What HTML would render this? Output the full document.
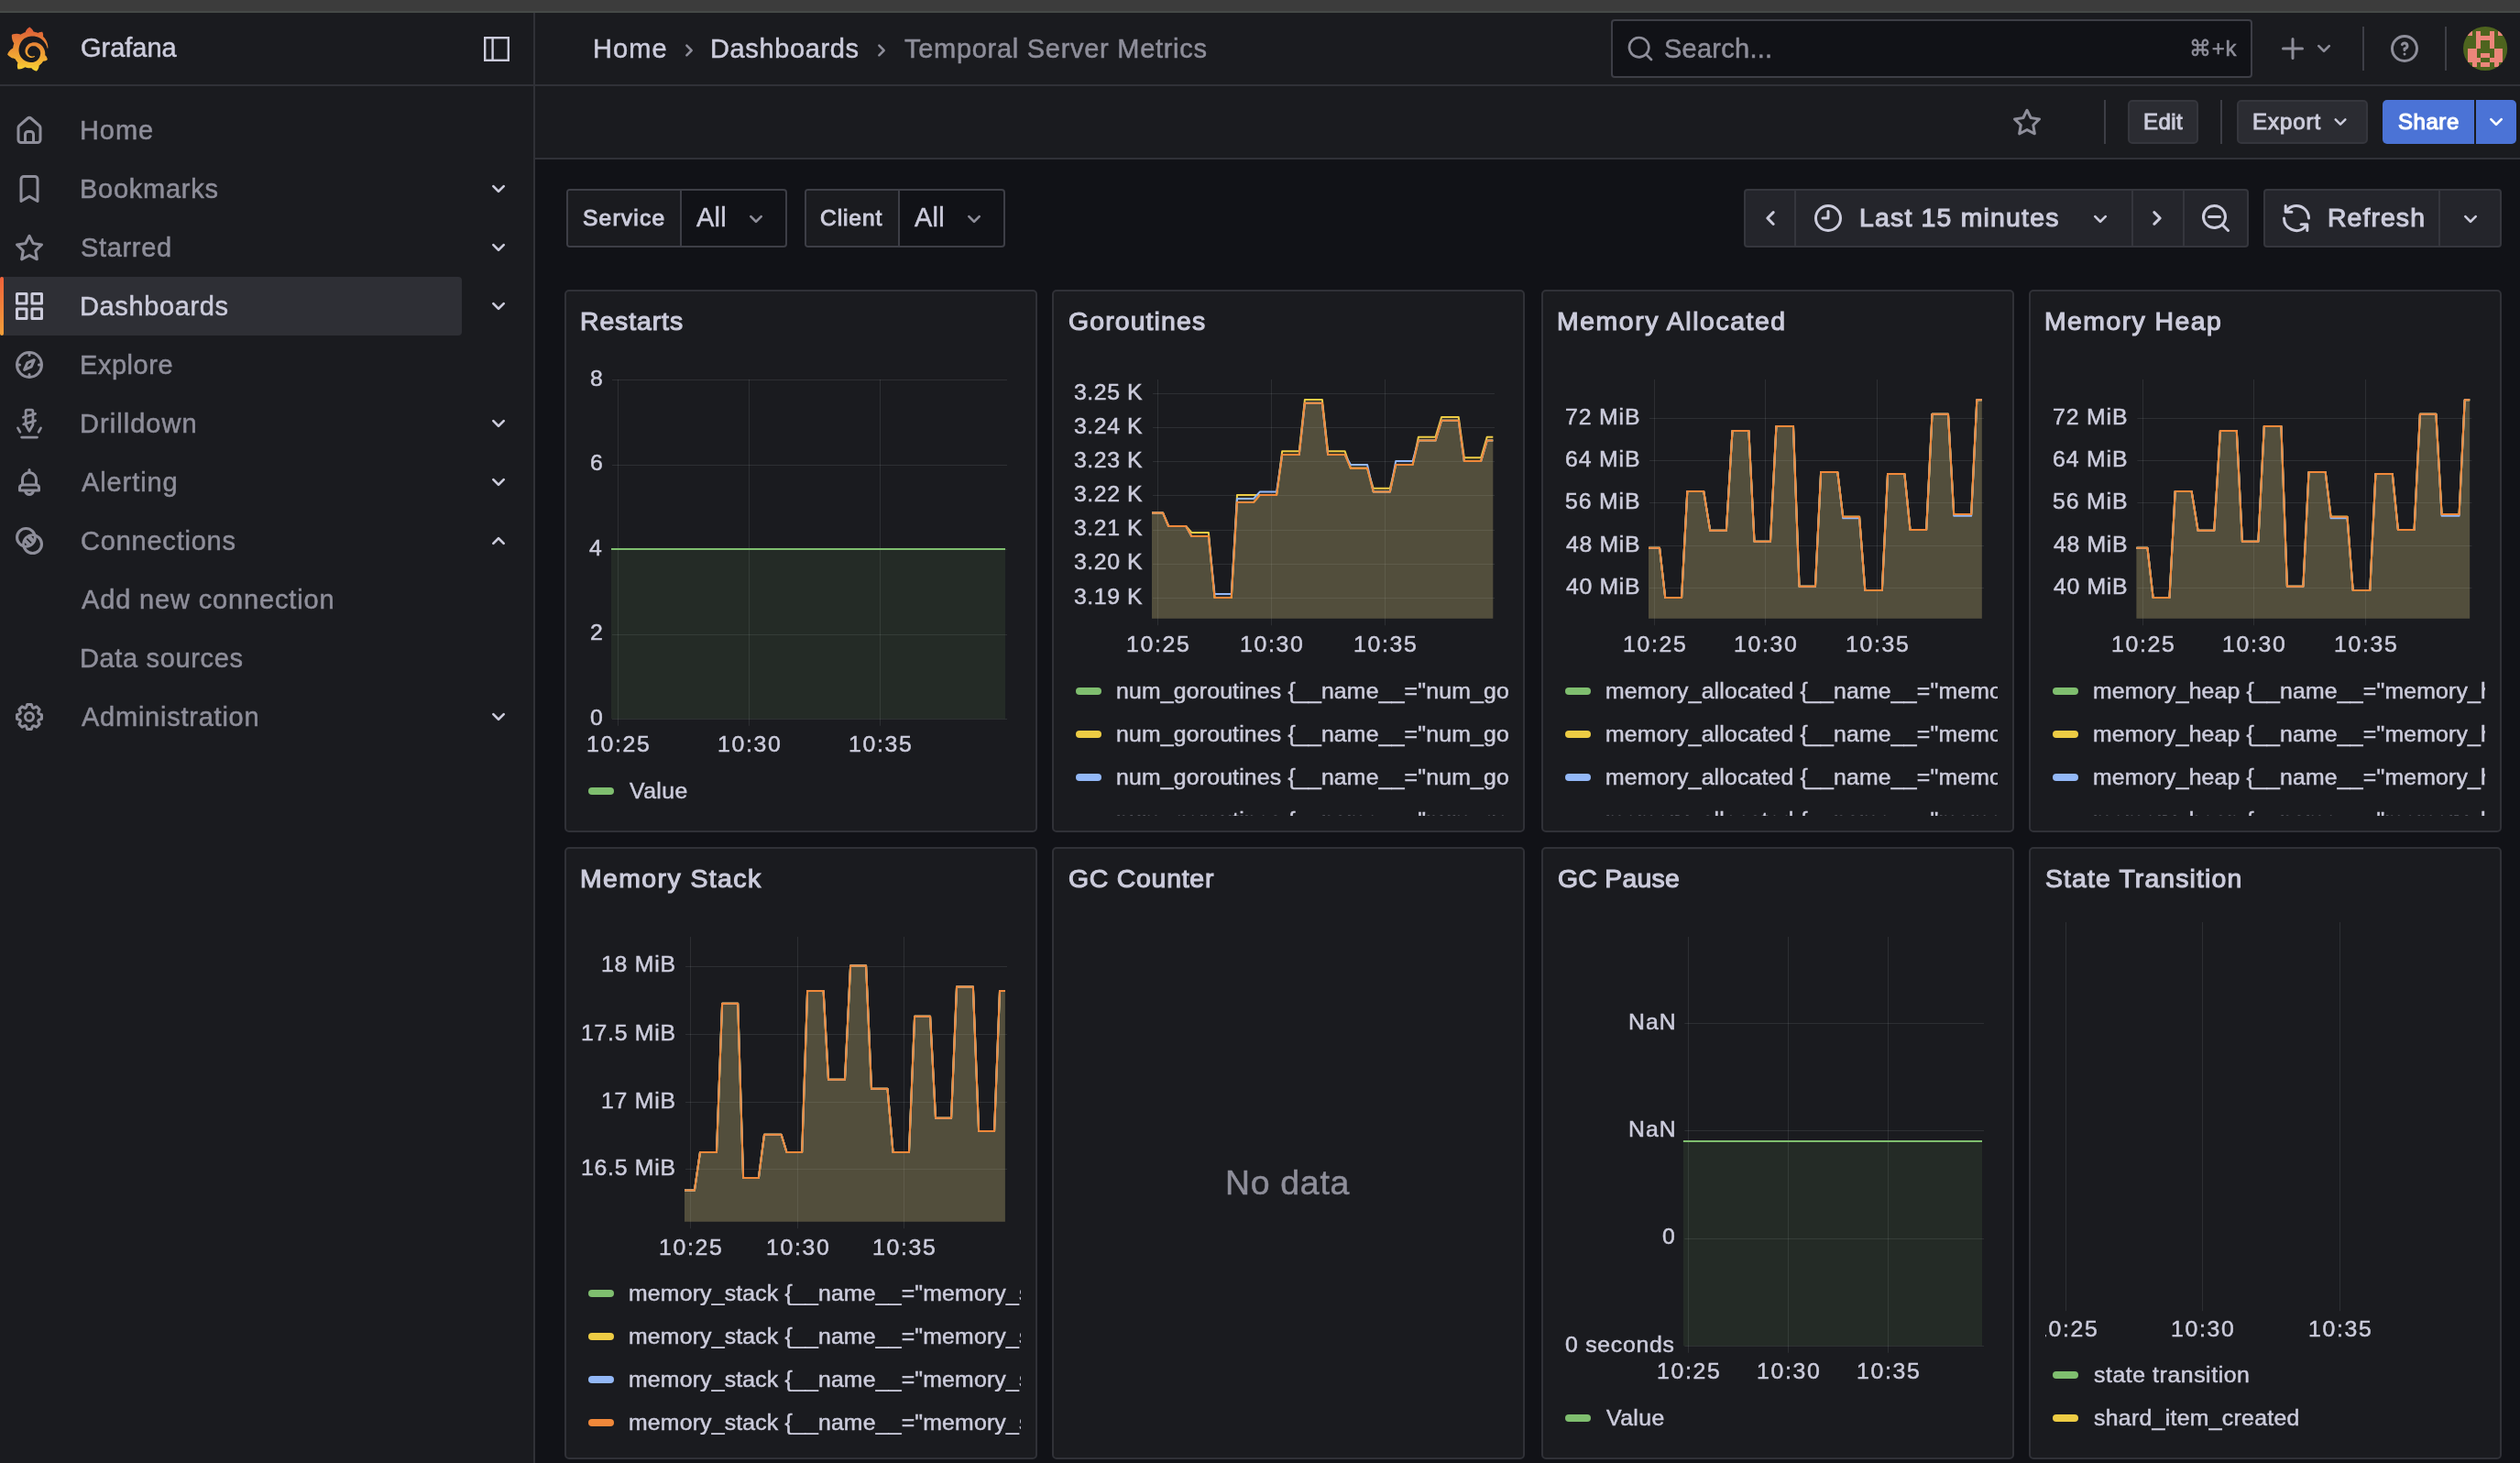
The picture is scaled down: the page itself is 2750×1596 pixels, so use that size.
<!DOCTYPE html>
<html lang="en"><head><meta charset="utf-8"><title>Temporal Server Metrics - Dashboards - Grafana</title>
<style>
html,body{margin:0;padding:0;background:#111217;}
body{width:2750px;height:1596px;position:relative;overflow:hidden;font-family:"Liberation Sans", "DejaVu Sans", sans-serif;}
.a{position:absolute;}
.t{white-space:nowrap;will-change:transform;}
svg{display:block;overflow:visible;}
</style></head><body>
<div class="a" style="left:0px;top:0px;width:2750px;height:12px;background:#3c3c3c;"></div>
<div class="a" style="left:0px;top:12px;width:2750px;height:2px;background:#454947;"></div>
<div class="a" style="left:0px;top:14px;width:2750px;height:160px;background:#1a1b1f;"></div>
<div class="a" style="left:0px;top:14px;width:584px;height:1582px;background:#1a1b1f;"></div>
<div class="a" style="left:0px;top:92px;width:2750px;height:2px;background:#303137;"></div>
<div class="a" style="left:584px;top:172px;width:2166px;height:2px;background:#303137;"></div>
<div class="a" style="left:582px;top:14px;width:2px;height:1582px;background:#303137;"></div>
<svg class="a" style="left:7px;top:28.5px" width="46.5" height="49" viewBox="0 0 351 365"><defs><linearGradient id="lg" x1="0" y1="1" x2="0" y2="0"><stop offset="0" stop-color="#f7d535"/><stop offset="0.25" stop-color="#f3b033"/><stop offset="1" stop-color="#dc5a38"/></linearGradient></defs><path fill="url(#lg)" d="M342,161.2c-0.6-6.1-1.6-13.1-3.6-20.9c-2-7.7-5-16.2-9.4-25c-4.4-8.8-10.1-17.9-17.5-26.8c-2.9-3.5-6.1-6.9-9.5-10.2 c5.1-20.3-6.2-37.9-6.2-37.9c-19.5-1.2-31.9,6.1-36.5,9.4c-0.8-0.3-1.5-0.7-2.3-1c-3.3-1.3-6.7-2.6-10.3-3.7 c-3.5-1.1-7.1-2.1-10.8-3c-3.7-0.9-7.4-1.6-11.2-2.2c-0.7-0.1-1.3-0.2-2-0.3c-8.5-27.2-32.9-38.6-32.9-38.6 c-27.3,17.3-32.4,41.5-32.4,41.5s-0.1,0.5-0.3,1.4c-1.5,0.4-3,0.9-4.5,1.3c-2.1,0.6-4.2,1.4-6.2,2.2c-2.1,0.8-4.1,1.6-6.2,2.5 c-4.1,1.8-8.2,3.8-12.2,6c-3.9,2.2-7.7,4.6-11.4,7.1c-0.5-0.2-1-0.4-1-0.4c-37.8-14.4-71.3,2.9-71.3,2.9 c-3.1,40.2,15.1,65.5,18.7,70.1c-0.9,2.5-1.7,5-2.5,7.5c-2.8,9.1-4.9,18.4-6.2,28.1c-0.2,1.4-0.4,2.8-0.5,4.2 C18.8,192.7,8.5,228,8.5,228c29.1,33.5,63.1,35.6,63.1,35.6c0,0,0.1-0.1,0.1-0.1c4.3,7.7,9.3,15,14.9,21.9c2.4,2.9,4.8,5.6,7.4,8.3 c-10.6,30.4,1.5,55.6,1.5,55.6c32.4,1.2,53.7-14.2,58.2-17.7c3.2,1.1,6.5,2.1,9.8,2.9c10,2.6,20.2,4.1,30.4,4.5 c2.5,0.1,5.1,0.2,7.6,0.1l1.2,0l0.8,0l1.6,0l1.6-0.1l0,0.1c15.3,21.8,42.1,24.9,42.1,24.9c19.1-20.1,20.2-40.1,20.2-44.4l0,0 c0,0,0-0.1,0-0.3c0-0.4,0-0.6,0-0.6l0,0c0-0.3,0-0.6,0-0.9c4-2.8,7.8-5.8,11.4-9.1c7.6-6.9,14.3-14.8,19.9-23.3 c0.5-0.8,1-1.6,1.5-2.4c21.6,1.2,36.9-13.4,36.9-13.4c-3.6-22.5-16.4-33.5-19.1-35.6l0,0c0,0-0.1-0.1-0.3-0.2 c-0.2-0.1-0.2-0.2-0.2-0.2c0,0,0,0,0,0c-0.1-0.1-0.3-0.2-0.5-0.3c0.1-1.4,0.2-2.7,0.3-4.1c0.2-2.4,0.2-4.9,0.2-7.3l0-1.8l0-0.9 l0-0.5c0-0.6,0-0.4,0-0.6l-0.1-1.5l-0.1-2c0-0.7-0.1-1.3-0.2-1.9c-0.1-0.6-0.1-1.3-0.2-1.9l-0.2-1.9l-0.3-1.9 c-0.4-2.5-0.8-4.9-1.4-7.4c-2.3-9.7-6.1-18.9-11-27.2c-5-8.3-11.2-15.6-18.3-21.8c-7-6.2-14.9-11.2-23.1-14.9 c-8.3-3.7-16.9-6.1-25.5-7.2c-4.3-0.6-8.6-0.8-12.9-0.7l-1.6,0l-0.4,0c-0.1,0-0.6,0-0.5,0l-0.7,0l-1.6,0.1 c-0.6,0-1.2,0.1-1.7,0.1c-2.2,0.2-4.4,0.5-6.5,0.9c-8.6,1.6-16.7,4.7-23.8,9c-7.1,4.3-13.3,9.6-18.3,15.6 c-5,6-8.9,12.7-11.6,19.6c-2.7,6.9-4.2,14.1-4.6,21c-0.1,1.7-0.1,3.5-0.1,5.2c0,0.4,0,0.9,0,1.3l0.1,1.4 c0.1,0.8,0.1,1.7,0.2,2.5c0.3,3.5,1,6.9,1.9,10.1c1.9,6.5,4.9,12.4,8.6,17.4c3.7,5,8.2,9.1,12.9,12.4c4.7,3.2,9.8,5.5,14.8,7 c5,1.5,10,2.1,14.7,2.1c0.6,0,1.2,0,1.7,0c0.3,0,0.6,0,0.9,0c0.3,0,0.6,0,0.9-0.1c0.5,0,1-0.1,1.5-0.1c0.1,0,0.3,0,0.4-0.1l0.5-0.1 c0.3,0,0.6-0.1,0.9-0.1c0.6-0.1,1.1-0.2,1.7-0.3c0.6-0.1,1.1-0.2,1.6-0.4c1.1-0.2,2.1-0.6,3.1-0.9c2-0.7,4-1.5,5.7-2.4 c1.8-0.9,3.4-2,5-3c0.4-0.3,0.9-0.6,1.3-1c1.6-1.3,1.9-3.7,0.6-5.3c-1.1-1.4-3.1-1.8-4.7-0.9c-0.4,0.2-0.8,0.4-1.2,0.6 c-1.4,0.7-2.8,1.3-4.3,1.8c-1.5,0.5-3.1,0.9-4.7,1.2c-0.8,0.1-1.6,0.2-2.5,0.3c-0.4,0-0.8,0.1-1.3,0.1c-0.4,0-0.9,0-1.2,0 c-0.4,0-0.8,0-1.2,0c-0.5,0-1,0-1.5-0.1c0,0-0.3,0-0.1,0l-0.2,0l-0.3,0c-0.2,0-0.5,0-0.7-0.1c-0.5-0.1-0.9-0.1-1.4-0.2 c-3.7-0.5-7.4-1.6-10.9-3.2c-3.6-1.6-7-3.8-10.1-6.6c-3.1-2.8-5.8-6.1-7.9-9.9c-2.1-3.8-3.6-8-4.3-12.4c-0.3-2.2-0.5-4.5-0.4-6.7 c0-0.6,0.1-1.2,0.1-1.8c0,0.2,0-0.1,0-0.1l0-0.2l0-0.5c0-0.3,0.1-0.6,0.1-0.9c0.1-1.2,0.3-2.4,0.5-3.6c1.7-9.6,6.5-19,13.9-26.1 c1.9-1.8,3.9-3.4,6-4.9c2.1-1.5,4.4-2.8,6.8-3.9c2.4-1.1,4.8-2,7.4-2.7c2.5-0.7,5.1-1.1,7.8-1.4c1.3-0.1,2.6-0.2,4-0.2 c0.4,0,0.6,0,0.9,0l1.1,0l0.7,0c0.3,0,0,0,0.1,0l0.3,0l1.1,0.1c2.9,0.2,5.7,0.6,8.5,1.3c5.6,1.2,11.1,3.3,16.2,6.1 c10.2,5.7,18.9,14.5,24.2,25.1c2.7,5.3,4.6,11,5.5,16.9c0.2,1.5,0.4,3,0.5,4.5l0.1,1.1l0.1,1.1c0,0.4,0,0.8,0,1.1 c0,0.4,0,0.8,0,1.1l0,1l0,1.1c0,0.7-0.1,1.9-0.1,2.6c-0.1,1.6-0.3,3.3-0.5,4.9c-0.2,1.6-0.5,3.2-0.8,4.8c-0.3,1.6-0.7,3.2-1.1,4.7 c-0.8,3.1-1.8,6.2-3,9.3c-2.4,6-5.6,11.8-9.4,17.1c-7.7,10.6-18.2,19.2-30.2,24.7c-6,2.7-12.3,4.7-18.8,5.7 c-3.2,0.6-6.5,0.9-9.8,1l-0.6,0l-0.5,0l-1.1,0l-1.6,0l-0.8,0c0.4,0-0.1,0-0.1,0l-0.3,0c-1.8,0-3.5-0.1-5.3-0.3 c-7-0.5-13.9-1.8-20.7-3.7c-6.7-1.9-13.2-4.6-19.4-7.8c-12.3-6.6-23.4-15.6-32-26.5c-4.3-5.4-8.1-11.3-11.2-17.4 c-3.1-6.1-5.6-12.6-7.4-19.1c-1.8-6.6-2.9-13.3-3.4-20.1l-0.1-1.3l0-0.3l0-0.3l0-0.6l0-1.1l0-0.3l0-0.4l0-0.8l0-1.6l0-0.3 c0,0,0,0.1,0-0.1l0-0.6c0-0.8,0-1.7,0-2.5c0.1-3.3,0.4-6.8,0.8-10.2c0.4-3.4,1-6.9,1.7-10.3c0.7-3.4,1.5-6.8,2.5-10.2 c1.9-6.7,4.3-13.2,7.1-19.3c5.7-12.2,13.1-23.1,22-31.8c2.2-2.2,4.5-4.2,6.9-6.2c2.4-1.9,4.9-3.7,7.5-5.4c2.5-1.7,5.2-3.2,7.9-4.6 c1.3-0.7,2.7-1.4,4.1-2c0.7-0.3,1.4-0.6,2.1-0.9c0.7-0.3,1.4-0.6,2.1-0.9c2.8-1.2,5.7-2.2,8.7-3.1c0.7-0.2,1.5-0.4,2.2-0.7 c0.7-0.2,1.5-0.4,2.2-0.6c1.5-0.4,3-0.8,4.5-1.1c0.7-0.2,1.5-0.3,2.3-0.5c0.8-0.2,1.5-0.3,2.3-0.5c0.8-0.1,1.5-0.3,2.3-0.4l1.1-0.2 l1.2-0.2c0.8-0.1,1.5-0.2,2.3-0.3c0.9-0.1,1.7-0.2,2.6-0.3c0.7-0.1,1.9-0.2,2.6-0.3c0.5-0.1,1.1-0.1,1.6-0.2l1.1-0.1l0.5-0.1l0.6,0 c0.9-0.1,1.7-0.1,2.6-0.2l1.3-0.1c0,0,0.5,0,0.1,0l0.3,0l0.6,0c0.7,0,1.5-0.1,2.2-0.1c2.9-0.1,5.9-0.1,8.8,0c5.8,0.2,11.5,0.9,17,1.9 c11.1,2.1,21.5,5.6,31,10.3c9.5,4.6,17.9,10.3,25.3,16.5c0.5,0.4,0.9,0.8,1.4,1.2c0.4,0.4,0.9,0.8,1.3,1.2c0.9,0.8,1.7,1.6,2.6,2.4 c0.9,0.8,1.7,1.6,2.5,2.4c0.8,0.8,1.6,1.6,2.4,2.5c3.1,3.3,6,6.6,8.6,10c5.2,6.7,9.4,13.5,12.7,19.9c0.2,0.4,0.4,0.8,0.6,1.2 c0.2,0.4,0.4,0.8,0.6,1.2c0.4,0.8,0.8,1.6,1.1,2.4c0.4,0.8,0.7,1.5,1.1,2.3c0.3,0.8,0.7,1.5,1,2.3c1.2,3,2.4,5.9,3.3,8.6 c1.5,4.4,2.6,8.3,3.5,11.7c0.3,1.4,1.6,2.3,3,2.1c1.5-0.1,2.6-1.3,2.6-2.8C342.6,170.4,342.5,166.1,342,161.2z"/></svg>
<svg class="a" style="left:527px;top:38.5px" width="30" height="29" viewBox="0 0 30 29"><rect x="2.2" y="2.2" width="25.6" height="24.6" fill="none" stroke="#ccccdc" stroke-width="2.4"/><line x1="10.6" y1="2" x2="10.6" y2="27" stroke="#ccccdc" stroke-width="2.4"/></svg>
<svg class="a" style="left:14.00px;top:124.00px" width="36" height="36" viewBox="0 0 24 24"><path fill="#8e8e9a" d="M20,8h0L14,2.74a3,3,0,0,0-4,0L4,8a3,3,0,0,0-1,2.26V19a3,3,0,0,0,3,3H18a3,3,0,0,0,3-3V10.25A3,3,0,0,0,20,8ZM14,20H10V15a1,1,0,0,1,1-1h2a1,1,0,0,1,1,1Zm5-1a1,1,0,0,1-1,1H16V15a3,3,0,0,0-3-3H11a3,3,0,0,0-3,3v5H6a1,1,0,0,1-1-1V10.25a1,1,0,0,1,.34-.75l6-5.25a1,1,0,0,1,1.32,0l6,5.25a1,1,0,0,1,.34.75Z"/></svg>
<svg class="a" style="left:14.00px;top:188.00px" width="36" height="36" viewBox="0 0 24 24"><path fill="#8e8e9a" d="M16,2H8A3,3,0,0,0,5,5V21a1,1,0,0,0,.5.87,1,1,0,0,0,1,0L12,18.69l5.5,3.18A1,1,0,0,0,18,22a1,1,0,0,0,.5-.13A1,1,0,0,0,19,21V5A3,3,0,0,0,16,2Zm1,17.27-4.5-2.6a1,1,0,0,0-1,0L7,19.27V5A1,1,0,0,1,8,4h8a1,1,0,0,1,1,1Z"/></svg>
<svg class="a" style="left:528.00px;top:190.00px" width="32" height="32" viewBox="0 0 24 24"><path fill="#ccccdc" d="M17,9.17a1,1,0,0,0-1.41,0L12,12.71,8.46,9.17a1,1,0,0,0-1.41,0,1,1,0,0,0,0,1.42l4.24,4.24a1,1,0,0,0,1.42,0L17,10.59A1,1,0,0,0,17,9.17Z"/></svg>
<svg class="a" style="left:14.00px;top:252.00px" width="36" height="36" viewBox="0 0 24 24"><path fill="#8e8e9a" d="M22,9.67A1,1,0,0,0,21.14,9l-5.69-.83L12.9,3a1,1,0,0,0-1.8,0L8.55,8.16,2.86,9a1,1,0,0,0-.81.68,1,1,0,0,0,.25,1l4.13,4-1,5.68A1,1,0,0,0,6.9,21.44L12,18.77l5.1,2.67a.93.93,0,0,0,.46.12,1,1,0,0,0,.59-.19,1,1,0,0,0,.4-1l-1-5.68,4.13-4A1,1,0,0,0,22,9.67Zm-6.15,4a1,1,0,0,0-.29.88l.72,4.2-3.76-2a1.06,1.06,0,0,0-.94,0l-3.76,2,.72-4.2a1,1,0,0,0-.29-.88l-3-3,4.21-.61a1,1,0,0,0,.76-.55L12,5.7l1.88,3.82a1,1,0,0,0,.76.55l4.21.61Z"/></svg>
<svg class="a" style="left:528.00px;top:254.00px" width="32" height="32" viewBox="0 0 24 24"><path fill="#ccccdc" d="M17,9.17a1,1,0,0,0-1.41,0L12,12.71,8.46,9.17a1,1,0,0,0-1.41,0,1,1,0,0,0,0,1.42l4.24,4.24a1,1,0,0,0,1.42,0L17,10.59A1,1,0,0,0,17,9.17Z"/></svg>
<div class="a" style="left:0px;top:302px;width:504px;height:64px;background:#2e2f35;border-radius:4px;"></div>
<div class="a" style="left:0;top:302px;width:4px;height:64px;border-radius:4px;background:linear-gradient(180deg,#f0623a,#f2a03a)"></div>
<svg class="a" style="left:14.00px;top:316.00px" width="36" height="36" viewBox="0 0 24 24"><path fill="#ccccdc" d="M10,13H3a1,1,0,0,0-1,1v7a1,1,0,0,0,1,1h7a1,1,0,0,0,1-1V14A1,1,0,0,0,10,13ZM9,20H4V15H9ZM21,2H14a1,1,0,0,0-1,1v7a1,1,0,0,0,1,1h7a1,1,0,0,0,1-1V3A1,1,0,0,0,21,2ZM20,9H15V4h5Zm1,4H14a1,1,0,0,0-1,1v7a1,1,0,0,0,1,1h7a1,1,0,0,0,1-1V14A1,1,0,0,0,21,13Zm-1,7H15V15h5ZM10,2H3A1,1,0,0,0,2,3v7a1,1,0,0,0,1,1h7a1,1,0,0,0,1-1V3A1,1,0,0,0,10,2ZM9,9H4V4H9Z"/></svg>
<svg class="a" style="left:528.00px;top:318.00px" width="32" height="32" viewBox="0 0 24 24"><path fill="#ccccdc" d="M17,9.17a1,1,0,0,0-1.41,0L12,12.71,8.46,9.17a1,1,0,0,0-1.41,0,1,1,0,0,0,0,1.42l4.24,4.24a1,1,0,0,0,1.42,0L17,10.59A1,1,0,0,0,17,9.17Z"/></svg>
<svg class="a" style="left:14.00px;top:380.00px" width="36" height="36" viewBox="0 0 24 24"><path fill="#8e8e9a" d="M12,2A10,10,0,1,0,22,12,10,10,0,0,0,12,2Zm1,17.93V19a1,1,0,0,0-2,0v.93A8,8,0,0,1,4.07,13H5a1,1,0,0,0,0-2H4.07A8,8,0,0,1,11,4.07V5a1,1,0,0,0,2,0V4.07A8,8,0,0,1,19.93,11H19a1,1,0,0,0,0,2h.93A8,8,0,0,1,13,19.93ZM15.14,7.55l-5,2.12a1,1,0,0,0-.52.52l-2.12,5a1,1,0,0,0,.21,1.1,1,1,0,0,0,.7.3.93.93,0,0,0,.4-.09l5-2.12a1,1,0,0,0,.52-.52l2.12-5a1,1,0,0,0-1.31-1.31Zm-2.49,5.1-2.28,1,1-2.28,2.28-1Z"/></svg>
<svg class="a" style="left:14px;top:444px" width="36" height="36" viewBox="0 0 24 24" fill="none" stroke="#8e8e9a" stroke-width="1.8" stroke-linecap="round" stroke-linejoin="round"><path d="M10.4,2.05h3.2a1,1,0,0,1,1,1V13L12,17.6,9.4,13V3.05a1,1,0,0,1,1-1Z"/><path d="M7.6,7.5L16.4,4.9M7.8,12.6L16.4,9.9"/><path d="M3.6,15.2L5.3,18.2M20.4,15.2L18.7,18.2M6.4,22.05H17.7"/></svg>
<svg class="a" style="left:528.00px;top:446.00px" width="32" height="32" viewBox="0 0 24 24"><path fill="#ccccdc" d="M17,9.17a1,1,0,0,0-1.41,0L12,12.71,8.46,9.17a1,1,0,0,0-1.41,0,1,1,0,0,0,0,1.42l4.24,4.24a1,1,0,0,0,1.42,0L17,10.59A1,1,0,0,0,17,9.17Z"/></svg>
<svg class="a" style="left:14.00px;top:508.00px" width="36" height="36" viewBox="0 0 24 24"><path fill="#8e8e9a" d="M18,13.18V10a6,6,0,0,0-5-5.91V3a1,1,0,0,0-2,0V4.09A6,6,0,0,0,6,10v3.18A3,3,0,0,0,4,16v2a1,1,0,0,0,1,1H8.14a4,4,0,0,0,7.72,0H19a1,1,0,0,0,1-1V16A3,3,0,0,0,18,13.18ZM8,10a4,4,0,0,1,8,0v3H8Zm4,10a2,2,0,0,1-1.72-1h3.44A2,2,0,0,1,12,20Zm6-3H6V16a1,1,0,0,1,1-1H17a1,1,0,0,1,1,1Z"/></svg>
<svg class="a" style="left:528.00px;top:510.00px" width="32" height="32" viewBox="0 0 24 24"><path fill="#ccccdc" d="M17,9.17a1,1,0,0,0-1.41,0L12,12.71,8.46,9.17a1,1,0,0,0-1.41,0,1,1,0,0,0,0,1.42l4.24,4.24a1,1,0,0,0,1.42,0L17,10.59A1,1,0,0,0,17,9.17Z"/></svg>
<svg class="a" style="left:10px;top:568px" width="44" height="44" viewBox="0 0 44 44"><defs><clipPath id="cn1"><circle cx="18.4" cy="18.3" r="9.85"/></clipPath></defs><circle cx="25.6" cy="25.6" r="9.9" fill="#8e8e9a" clip-path="url(#cn1)"/><circle cx="18.4" cy="18.3" r="9.85" fill="none" stroke="#8e8e9a" stroke-width="3.1"/><circle cx="25.6" cy="25.6" r="9.9" fill="none" stroke="#8e8e9a" stroke-width="3.1"/><path d="M19.3,19.6L24.1,24.4" stroke="#1a1b1f" stroke-width="1.6"/><path d="M24.1,16.8L26.8,17.1L26.5,19.9ZM16.8,24.1L19.6,26.5L17,26.8Z" fill="#1a1b1f"/></svg>
<svg class="a" style="left:528.00px;top:574.00px" width="32" height="32" viewBox="0 0 24 24"><path fill="#ccccdc" d="M17,13.41,12.71,9.17a1,1,0,0,0-1.42,0L7.05,13.41a1,1,0,0,0,0,1.42,1,1,0,0,0,1.41,0L12,11.29l3.54,3.54a1,1,0,0,0,.7.29,1,1,0,0,0,.71-.29A1,1,0,0,0,17,13.41Z"/></svg>
<svg class="a" style="left:14.00px;top:764.00px" width="36" height="36" viewBox="0 0 24 24"><path fill="#8e8e9a" d="M21.32,9.55l-1.89-.63.89-1.78A1,1,0,0,0,20.13,6L18,3.87a1,1,0,0,0-1.15-.19l-1.78.89-.63-1.89A1,1,0,0,0,13.5,2h-3a1,1,0,0,0-.95.68L8.92,4.57,7.14,3.68A1,1,0,0,0,6,3.87L3.87,6a1,1,0,0,0-.19,1.15l.89,1.78-1.89.63A1,1,0,0,0,2,10.5v3a1,1,0,0,0,.68.95l1.89.63-.89,1.78A1,1,0,0,0,3.87,18L6,20.13a1,1,0,0,0,1.15.19l1.78-.89.63,1.89a1,1,0,0,0,.95.68h3a1,1,0,0,0,.95-.68l.63-1.89,1.78.89A1,1,0,0,0,18,20.13L20.13,18a1,1,0,0,0,.19-1.15l-.89-1.78,1.89-.63A1,1,0,0,0,22,13.5v-3A1,1,0,0,0,21.32,9.55ZM20,12.78l-1.2.4A2,2,0,0,0,17.64,16l.57,1.14-1.1,1.1L16,17.64a2,2,0,0,0-2.79,1.16l-.4,1.2H11.22l-.4-1.2A2,2,0,0,0,8,17.64l-1.14.57-1.1-1.1L6.36,16A2,2,0,0,0,5.2,13.18L4,12.78V11.22l1.2-.4A2,2,0,0,0,6.36,8L5.79,6.89l1.1-1.1L8,6.36A2,2,0,0,0,10.82,5.2l.4-1.2h1.56l.4,1.2A2,2,0,0,0,16,6.36l1.14-.57,1.1,1.1L17.64,8a2,2,0,0,0,1.16,2.79l1.2.4ZM12,8a4,4,0,1,0,4,4A4,4,0,0,0,12,8Zm0,6a2,2,0,1,1,2-2A2,2,0,0,1,12,14Z"/></svg>
<svg class="a" style="left:528.00px;top:766.00px" width="32" height="32" viewBox="0 0 24 24"><path fill="#ccccdc" d="M17,9.17a1,1,0,0,0-1.41,0L12,12.71,8.46,9.17a1,1,0,0,0-1.41,0,1,1,0,0,0,0,1.42l4.24,4.24a1,1,0,0,0,1.42,0L17,10.59A1,1,0,0,0,17,9.17Z"/></svg>
<svg class="a" style="left:736.50px;top:40.00px" width="30" height="30" viewBox="0 0 24 24"><path fill="#8e8e9a" d="M14.83,11.29,10.59,7.05a1,1,0,0,0-1.42,0,1,1,0,0,0,0,1.41L12.71,12,9.17,15.54a1,1,0,0,0,0,1.41,1,1,0,0,0,.71.29,1,1,0,0,0,.71-.29l4.24-4.24A1,1,0,0,0,14.83,11.29Z"/></svg>
<svg class="a" style="left:946.75px;top:40.00px" width="30" height="30" viewBox="0 0 24 24"><path fill="#8e8e9a" d="M14.83,11.29,10.59,7.05a1,1,0,0,0-1.42,0,1,1,0,0,0,0,1.41L12.71,12,9.17,15.54a1,1,0,0,0,0,1.41,1,1,0,0,0,.71.29,1,1,0,0,0,.71-.29l4.24-4.24A1,1,0,0,0,14.83,11.29Z"/></svg>
<div class="a" style="left:1758px;top:21px;width:700px;height:64px;background:#111217;border:2px solid #3d3e46;border-radius:4px;box-sizing:border-box;"></div>
<svg class="a" style="left:1774.00px;top:37.00px" width="32" height="32" viewBox="0 0 24 24"><path fill="#8e8e9a" d="M21.71,20.29,18,16.61A9,9,0,1,0,16.61,18l3.68,3.68a1,1,0,0,0,1.42,0A1,1,0,0,0,21.71,20.29ZM11,18a7,7,0,1,1,7-7A7,7,0,0,1,11,18Z"/></svg>
<svg class="a" style="left:2484.00px;top:34.80px" width="36" height="36" viewBox="0 0 24 24"><path fill="#8e8e9a" d="M19,11H13V5a1,1,0,0,0-2,0v6H5a1,1,0,0,0,0,2h6v6a1,1,0,0,0,2,0V13h6a1,1,0,0,0,0-2Z"/></svg>
<svg class="a" style="left:2520.00px;top:37.00px" width="32" height="32" viewBox="0 0 24 24"><path fill="#8e8e9a" d="M17,9.17a1,1,0,0,0-1.41,0L12,12.71,8.46,9.17a1,1,0,0,0-1.41,0,1,1,0,0,0,0,1.42l4.24,4.24a1,1,0,0,0,1.42,0L17,10.59A1,1,0,0,0,17,9.17Z"/></svg>
<div class="a" style="left:2578px;top:29px;width:2px;height:48px;background:#3d3e46;"></div>
<svg class="a" style="left:2605.75px;top:35.00px" width="36" height="36" viewBox="0 0 24 24"><path fill="#8e8e9a" d="M11.29,15.29a1.58,1.58,0,0,0-.12.15.76.76,0,0,0-.09.18.64.64,0,0,0-.06.18,1.36,1.36,0,0,0,0,.2.84.84,0,0,0,.08.38.9.9,0,0,0,.54.54.94.94,0,0,0,.76,0,.9.9,0,0,0,.54-.54A1,1,0,0,0,13,16a1,1,0,0,0-.29-.71A1,1,0,0,0,11.29,15.29ZM12,2A10,10,0,1,0,22,12,10,10,0,0,0,12,2Zm0,18a8,8,0,1,1,8-8A8,8,0,0,1,12,20ZM12,7A3,3,0,0,0,9.4,8.5a1,1,0,1,0,1.73,1A1,1,0,0,1,12,9a1,1,0,0,1,0,2,1,1,0,0,0-1,1v1a1,1,0,0,0,2,0v-.18A3,3,0,0,0,12,7Z"/></svg>
<div class="a" style="left:2668px;top:29px;width:2px;height:48px;background:#3d3e46;"></div>
<svg class="a" style="left:2688px;top:29px" width="48.4" height="48.4"><defs><clipPath id="av"><circle cx="24.1" cy="24" r="24.1"/></clipPath></defs><g clip-path="url(#av)"><rect width="49" height="49" fill="#4e641e"/><rect x="4.90" y="5.10" width="4.94" height="4.94" fill="#ec867a" shape-rendering="crispEdges"/><rect x="14.48" y="5.10" width="4.94" height="4.94" fill="#ec867a" shape-rendering="crispEdges"/><rect x="28.85" y="5.10" width="4.94" height="4.94" fill="#ec867a" shape-rendering="crispEdges"/><rect x="38.43" y="5.10" width="4.94" height="4.94" fill="#ec867a" shape-rendering="crispEdges"/><rect x="14.48" y="9.89" width="4.94" height="4.94" fill="#ec867a" shape-rendering="crispEdges"/><rect x="19.27" y="9.89" width="4.94" height="4.94" fill="#ec867a" shape-rendering="crispEdges"/><rect x="24.06" y="9.89" width="4.94" height="4.94" fill="#ec867a" shape-rendering="crispEdges"/><rect x="28.85" y="9.89" width="4.94" height="4.94" fill="#ec867a" shape-rendering="crispEdges"/><rect x="14.48" y="14.68" width="4.94" height="4.94" fill="#ec867a" shape-rendering="crispEdges"/><rect x="28.85" y="14.68" width="4.94" height="4.94" fill="#ec867a" shape-rendering="crispEdges"/><rect x="14.48" y="19.47" width="4.94" height="4.94" fill="#ec867a" shape-rendering="crispEdges"/><rect x="28.85" y="19.47" width="4.94" height="4.94" fill="#ec867a" shape-rendering="crispEdges"/><rect x="4.90" y="24.26" width="4.94" height="4.94" fill="#ec867a" shape-rendering="crispEdges"/><rect x="9.69" y="24.26" width="4.94" height="4.94" fill="#ec867a" shape-rendering="crispEdges"/><rect x="33.64" y="24.26" width="4.94" height="4.94" fill="#ec867a" shape-rendering="crispEdges"/><rect x="38.43" y="24.26" width="4.94" height="4.94" fill="#ec867a" shape-rendering="crispEdges"/><rect x="4.90" y="29.05" width="4.94" height="4.94" fill="#ec867a" shape-rendering="crispEdges"/><rect x="9.69" y="29.05" width="4.94" height="4.94" fill="#ec867a" shape-rendering="crispEdges"/><rect x="19.27" y="29.05" width="4.94" height="4.94" fill="#ec867a" shape-rendering="crispEdges"/><rect x="24.06" y="29.05" width="4.94" height="4.94" fill="#ec867a" shape-rendering="crispEdges"/><rect x="33.64" y="29.05" width="4.94" height="4.94" fill="#ec867a" shape-rendering="crispEdges"/><rect x="38.43" y="29.05" width="4.94" height="4.94" fill="#ec867a" shape-rendering="crispEdges"/><rect x="4.90" y="33.84" width="4.94" height="4.94" fill="#ec867a" shape-rendering="crispEdges"/><rect x="9.69" y="33.84" width="4.94" height="4.94" fill="#ec867a" shape-rendering="crispEdges"/><rect x="14.48" y="33.84" width="4.94" height="4.94" fill="#ec867a" shape-rendering="crispEdges"/><rect x="28.85" y="33.84" width="4.94" height="4.94" fill="#ec867a" shape-rendering="crispEdges"/><rect x="33.64" y="33.84" width="4.94" height="4.94" fill="#ec867a" shape-rendering="crispEdges"/><rect x="38.43" y="33.84" width="4.94" height="4.94" fill="#ec867a" shape-rendering="crispEdges"/><rect x="9.69" y="38.63" width="4.94" height="4.94" fill="#ec867a" shape-rendering="crispEdges"/><rect x="19.27" y="38.63" width="4.94" height="4.94" fill="#ec867a" shape-rendering="crispEdges"/><rect x="24.06" y="38.63" width="4.94" height="4.94" fill="#ec867a" shape-rendering="crispEdges"/><rect x="33.64" y="38.63" width="4.94" height="4.94" fill="#ec867a" shape-rendering="crispEdges"/></g></svg>
<svg class="a" style="left:2194.00px;top:115.00px" width="36" height="36" viewBox="0 0 24 24"><path fill="#8e8e9a" d="M22,9.67A1,1,0,0,0,21.14,9l-5.69-.83L12.9,3a1,1,0,0,0-1.8,0L8.55,8.16,2.86,9a1,1,0,0,0-.81.68,1,1,0,0,0,.25,1l4.13,4-1,5.68A1,1,0,0,0,6.9,21.44L12,18.77l5.1,2.67a.93.93,0,0,0,.46.12,1,1,0,0,0,.59-.19,1,1,0,0,0,.4-1l-1-5.68,4.13-4A1,1,0,0,0,22,9.67Zm-6.15,4a1,1,0,0,0-.29.88l.72,4.2-3.76-2a1.06,1.06,0,0,0-.94,0l-3.76,2,.72-4.2a1,1,0,0,0-.29-.88l-3-3,4.21-.61a1,1,0,0,0,.76-.55L12,5.7l1.88,3.82a1,1,0,0,0,.76.55l4.21.61Z"/></svg>
<div class="a" style="left:2296px;top:109px;width:2px;height:48px;background:#3d3e46;"></div>
<div class="a" style="left:2322px;top:109px;width:77px;height:48px;background:#2b2c32;border:2px solid #35363d;border-radius:5px;box-sizing:border-box;"></div>
<div class="a" style="left:2423px;top:109px;width:2px;height:48px;background:#3d3e46;"></div>
<div class="a" style="left:2441px;top:109px;width:143px;height:48px;background:#2b2c32;border:2px solid #35363d;border-radius:5px;box-sizing:border-box;"></div>
<svg class="a" style="left:2539.25px;top:118.00px" width="30" height="30" viewBox="0 0 24 24"><path fill="#ccccdc" d="M17,9.17a1,1,0,0,0-1.41,0L12,12.71,8.46,9.17a1,1,0,0,0-1.41,0,1,1,0,0,0,0,1.42l4.24,4.24a1,1,0,0,0,1.42,0L17,10.59A1,1,0,0,0,17,9.17Z"/></svg>
<div class="a" style="left:2600px;top:109px;width:100px;height:48px;background:#4b73d6;border-radius:5px 0 0 5px;"></div>
<div class="a" style="left:2702px;top:109px;width:44px;height:48px;background:#4b73d6;border-radius:0 5px 5px 0;"></div>
<svg class="a" style="left:2708.00px;top:117.00px" width="32" height="32" viewBox="0 0 24 24"><path fill="#ffffff" d="M17,9.17a1,1,0,0,0-1.41,0L12,12.71,8.46,9.17a1,1,0,0,0-1.41,0,1,1,0,0,0,0,1.42l4.24,4.24a1,1,0,0,0,1.42,0L17,10.59A1,1,0,0,0,17,9.17Z"/></svg>
<div class="a" style="left:618px;top:206px;width:241px;height:64px;background:#111217;border:2px solid #3d3e46;border-radius:4px;box-sizing:border-box;"></div>
<div class="a" style="left:620px;top:208px;width:122px;height:60px;background:#1a1b1f;border-right:2px solid #3d3e46;border-radius:3px 0 0 3px;"></div>
<svg class="a" style="left:809.00px;top:222.50px" width="32" height="32" viewBox="0 0 24 24"><path fill="#8e8e9a" d="M17,9.17a1,1,0,0,0-1.41,0L12,12.71,8.46,9.17a1,1,0,0,0-1.41,0,1,1,0,0,0,0,1.42l4.24,4.24a1,1,0,0,0,1.42,0L17,10.59A1,1,0,0,0,17,9.17Z"/></svg>
<div class="a" style="left:878px;top:206px;width:219px;height:64px;background:#111217;border:2px solid #3d3e46;border-radius:4px;box-sizing:border-box;"></div>
<div class="a" style="left:880px;top:208px;width:100px;height:60px;background:#1a1b1f;border-right:2px solid #3d3e46;border-radius:3px 0 0 3px;"></div>
<svg class="a" style="left:1047.00px;top:222.50px" width="32" height="32" viewBox="0 0 24 24"><path fill="#8e8e9a" d="M17,9.17a1,1,0,0,0-1.41,0L12,12.71,8.46,9.17a1,1,0,0,0-1.41,0,1,1,0,0,0,0,1.42l4.24,4.24a1,1,0,0,0,1.42,0L17,10.59A1,1,0,0,0,17,9.17Z"/></svg>
<div class="a" style="left:1903px;top:206px;width:551px;height:64px;background:#24252b;border:2px solid #35363d;border-radius:4px;box-sizing:border-box;"></div>
<div class="a" style="left:1958px;top:208px;width:2px;height:60px;background:#35363d;"></div>
<div class="a" style="left:2326px;top:208px;width:2px;height:60px;background:#35363d;"></div>
<div class="a" style="left:2382px;top:208px;width:2px;height:60px;background:#35363d;"></div>
<svg class="a" style="left:1913.50px;top:220.00px" width="36" height="36" viewBox="0 0 24 24"><path fill="#ccccdc" d="M11.29,12l3.54-3.54a1,1,0,0,0,0-1.41,1,1,0,0,0-1.42,0L9.17,11.29a1,1,0,0,0,0,1.42L13.41,17a1,1,0,0,0,.71.29,1,1,0,0,0,.71-.29,1,1,0,0,0,0-1.41Z"/></svg>
<svg class="a" style="left:1977.00px;top:220.00px" width="36" height="36" viewBox="0 0 24 24"><path fill="#ccccdc" d="M12,2A10,10,0,1,0,22,12,10.01114,10.01114,0,0,0,12,2Zm0,18a8,8,0,1,1,8-8A8.00917,8.00917,0,0,1,12,20ZM12,6a.99974.99974,0,0,0-1,1v4H8a1,1,0,0,0,0,2h4a.99974.99974,0,0,0,1-1V7A.99974.99974,0,0,0,12,6Z"/></svg>
<svg class="a" style="left:2276.00px;top:222.50px" width="32" height="32" viewBox="0 0 24 24"><path fill="#ccccdc" d="M17,9.17a1,1,0,0,0-1.41,0L12,12.71,8.46,9.17a1,1,0,0,0-1.41,0,1,1,0,0,0,0,1.42l4.24,4.24a1,1,0,0,0,1.42,0L17,10.59A1,1,0,0,0,17,9.17Z"/></svg>
<svg class="a" style="left:2335.60px;top:220.00px" width="36" height="36" viewBox="0 0 24 24"><path fill="#ccccdc" d="M14.83,11.29,10.59,7.05a1,1,0,0,0-1.42,0,1,1,0,0,0,0,1.41L12.71,12,9.17,15.54a1,1,0,0,0,0,1.41,1,1,0,0,0,.71.29,1,1,0,0,0,.71-.29l4.24-4.24A1,1,0,0,0,14.83,11.29Z"/></svg>
<svg class="a" style="left:2400.00px;top:220.00px" width="36" height="36" viewBox="0 0 24 24"><path fill="#ccccdc" d="M21.71,20.29,18,16.61A9,9,0,1,0,16.61,18l3.68,3.68a1,1,0,0,0,1.42,0A1,1,0,0,0,21.71,20.29ZM11,18a7,7,0,1,1,7-7A7,7,0,0,1,11,18ZM15,10H7a1,1,0,0,0,0,2h8a1,1,0,0,0,0-2Z"/></svg>
<div class="a" style="left:2470px;top:206px;width:260px;height:64px;background:#24252b;border:2px solid #35363d;border-radius:4px;box-sizing:border-box;"></div>
<div class="a" style="left:2661px;top:208px;width:2px;height:60px;background:#35363d;"></div>
<svg class="a" style="left:2488.00px;top:220.00px" width="36" height="36" viewBox="0 0 24 24"><path fill="#ccccdc" d="M19.91,15.51H15.38a1,1,0,0,0,0,2h2.4A8,8,0,0,1,4,12a1,1,0,0,0-2,0,10,10,0,0,0,16.88,7.23V21a1,1,0,0,0,2,0V16.5A1,1,0,0,0,19.91,15.51ZM12,2A10,10,0,0,0,5.12,4.77V3a1,1,0,0,0-2,0V7.5a1,1,0,0,0,1,1h4.5a1,1,0,0,0,0-2H6.22A8,8,0,0,1,20,12a1,1,0,0,0,2,0A10,10,0,0,0,12,2Z"/></svg>
<svg class="a" style="left:2680.00px;top:222.50px" width="32" height="32" viewBox="0 0 24 24"><path fill="#ccccdc" d="M17,9.17a1,1,0,0,0-1.41,0L12,12.71,8.46,9.17a1,1,0,0,0-1.41,0,1,1,0,0,0,0,1.42l4.24,4.24a1,1,0,0,0,1.42,0L17,10.59A1,1,0,0,0,17,9.17Z"/></svg>
<div class="a" style="left:616px;top:316px;width:516px;height:592px;background:#1a1b1f;border:2px solid #303137;border-radius:5px;box-sizing:border-box;"></div>
<svg class="a" style="left:0;top:0" width="2750" height="1596" viewBox="0 0 2750 1596"><line x1="668.0" y1="414.5" x2="1099.0" y2="414.5" stroke="rgba(240,250,255,0.09)" stroke-width="1"/><line x1="668.0" y1="507.5" x2="1099.0" y2="507.5" stroke="rgba(240,250,255,0.09)" stroke-width="1"/><line x1="668.0" y1="599.5" x2="1099.0" y2="599.5" stroke="rgba(240,250,255,0.09)" stroke-width="1"/><line x1="668.0" y1="692.5" x2="1099.0" y2="692.5" stroke="rgba(240,250,255,0.09)" stroke-width="1"/><line x1="668.0" y1="784.5" x2="1099.0" y2="784.5" stroke="rgba(240,250,255,0.09)" stroke-width="1"/><line x1="674.5" y1="414.0" x2="674.5" y2="791.8" stroke="rgba(240,250,255,0.09)" stroke-width="1"/><line x1="817.5" y1="414.0" x2="817.5" y2="791.8" stroke="rgba(240,250,255,0.09)" stroke-width="1"/><line x1="960.5" y1="414.0" x2="960.5" y2="791.8" stroke="rgba(240,250,255,0.09)" stroke-width="1"/><polygon points="667.0,784.3 667.0,599.0 1097.0,599.0 1097.0,784.3" fill="#7fbe6f" fill-opacity="0.1"/><polyline points="667.0,599.0 1097.0,599.0" fill="none" stroke="#7fbe6f" stroke-width="2" stroke-linejoin="round"/></svg>
<div class="a" style="left:642px;top:859px;width:28px;height:8px;background:#7fbe6f;border-radius:4px;"></div>
<div class="a" style="left:1148px;top:316px;width:516px;height:592px;background:#1a1b1f;border:2px solid #303137;border-radius:5px;box-sizing:border-box;"></div>
<svg class="a" style="left:0;top:0" width="2750" height="1596" viewBox="0 0 2750 1596"><line x1="1258.0" y1="429.5" x2="1631.0" y2="429.5" stroke="rgba(240,250,255,0.09)" stroke-width="1"/><line x1="1258.0" y1="466.5" x2="1631.0" y2="466.5" stroke="rgba(240,250,255,0.09)" stroke-width="1"/><line x1="1258.0" y1="503.5" x2="1631.0" y2="503.5" stroke="rgba(240,250,255,0.09)" stroke-width="1"/><line x1="1258.0" y1="540.5" x2="1631.0" y2="540.5" stroke="rgba(240,250,255,0.09)" stroke-width="1"/><line x1="1258.0" y1="578.5" x2="1631.0" y2="578.5" stroke="rgba(240,250,255,0.09)" stroke-width="1"/><line x1="1258.0" y1="615.5" x2="1631.0" y2="615.5" stroke="rgba(240,250,255,0.09)" stroke-width="1"/><line x1="1258.0" y1="652.5" x2="1631.0" y2="652.5" stroke="rgba(240,250,255,0.09)" stroke-width="1"/><line x1="1263.5" y1="414.0" x2="1263.5" y2="682.3" stroke="rgba(240,250,255,0.09)" stroke-width="1"/><line x1="1387.5" y1="414.0" x2="1387.5" y2="682.3" stroke="rgba(240,250,255,0.09)" stroke-width="1"/><line x1="1511.5" y1="414.0" x2="1511.5" y2="682.3" stroke="rgba(240,250,255,0.09)" stroke-width="1"/><polygon points="1257.0,674.8 1257.0,559.4 1269.0,559.4 1275.2,574.0 1294.2,574.0 1300.3,584.9 1318.9,584.9 1325.5,651.9 1343.8,651.9 1350.0,548.0 1368.1,548.0 1374.7,540.1 1393.1,540.1 1399.2,495.9 1417.8,495.9 1423.9,439.7 1442.9,439.7 1449.1,495.9 1467.6,495.9 1474.0,510.8 1492.1,510.8 1498.7,536.6 1516.9,536.6 1523.2,506.9 1541.6,506.9 1547.9,480.6 1566.5,480.6 1573.1,458.7 1591.7,458.7 1597.8,502.9 1616.2,502.9 1622.7,480.6 1629.3,480.6 1629.3,674.8" fill="#7fbe6f" fill-opacity="0.1"/><polygon points="1257.0,674.8 1257.0,559.4 1269.0,559.4 1275.2,574.0 1294.2,574.0 1300.3,581.0 1318.9,581.0 1325.5,651.9 1343.8,651.9 1350.0,540.1 1368.1,540.1 1374.7,540.1 1393.1,540.1 1399.2,492.2 1417.8,492.2 1423.9,436.0 1442.9,436.0 1449.1,492.2 1467.6,492.2 1474.0,510.8 1492.1,510.8 1498.7,532.7 1516.9,532.7 1523.2,506.9 1541.6,506.9 1547.9,476.7 1566.5,476.7 1573.1,455.0 1591.7,455.0 1597.8,499.2 1616.2,499.2 1622.7,476.7 1629.3,476.7 1629.3,674.8" fill="#edcc44" fill-opacity="0.1"/><polygon points="1257.0,674.8 1257.0,559.4 1269.0,559.4 1275.2,574.0 1294.2,574.0 1300.3,584.9 1318.9,584.9 1325.5,647.9 1343.8,647.9 1350.0,544.0 1368.1,544.0 1374.7,536.6 1393.1,536.6 1399.2,495.9 1417.8,495.9 1423.9,439.7 1442.9,439.7 1449.1,495.9 1467.6,495.9 1474.0,506.9 1492.1,506.9 1498.7,536.6 1516.9,536.6 1523.2,502.9 1541.6,502.9 1547.9,480.6 1566.5,480.6 1573.1,458.7 1591.7,458.7 1597.8,502.9 1616.2,502.9 1622.7,480.6 1629.3,480.6 1629.3,674.8" fill="#93b8f7" fill-opacity="0.1"/><polygon points="1257.0,674.8 1257.0,559.4 1269.0,559.4 1275.2,574.0 1294.2,574.0 1300.3,584.9 1318.9,584.9 1325.5,651.9 1343.8,651.9 1350.0,548.0 1368.1,548.0 1374.7,540.1 1393.1,540.1 1399.2,495.9 1417.8,495.9 1423.9,439.7 1442.9,439.7 1449.1,495.9 1467.6,495.9 1474.0,510.8 1492.1,510.8 1498.7,536.6 1516.9,536.6 1523.2,506.9 1541.6,506.9 1547.9,480.6 1566.5,480.6 1573.1,458.7 1591.7,458.7 1597.8,502.9 1616.2,502.9 1622.7,480.6 1629.3,480.6 1629.3,674.8" fill="#f0883a" fill-opacity="0.1"/><polyline points="1257.0,559.4 1269.0,559.4 1275.2,574.0 1294.2,574.0 1300.3,584.9 1318.9,584.9 1325.5,651.9 1343.8,651.9 1350.0,548.0 1368.1,548.0 1374.7,540.1 1393.1,540.1 1399.2,495.9 1417.8,495.9 1423.9,439.7 1442.9,439.7 1449.1,495.9 1467.6,495.9 1474.0,510.8 1492.1,510.8 1498.7,536.6 1516.9,536.6 1523.2,506.9 1541.6,506.9 1547.9,480.6 1566.5,480.6 1573.1,458.7 1591.7,458.7 1597.8,502.9 1616.2,502.9 1622.7,480.6 1629.3,480.6" fill="none" stroke="#7fbe6f" stroke-width="2" stroke-linejoin="round"/><polyline points="1257.0,559.4 1269.0,559.4 1275.2,574.0 1294.2,574.0 1300.3,581.0 1318.9,581.0 1325.5,651.9 1343.8,651.9 1350.0,540.1 1368.1,540.1 1374.7,540.1 1393.1,540.1 1399.2,492.2 1417.8,492.2 1423.9,436.0 1442.9,436.0 1449.1,492.2 1467.6,492.2 1474.0,510.8 1492.1,510.8 1498.7,532.7 1516.9,532.7 1523.2,506.9 1541.6,506.9 1547.9,476.7 1566.5,476.7 1573.1,455.0 1591.7,455.0 1597.8,499.2 1616.2,499.2 1622.7,476.7 1629.3,476.7" fill="none" stroke="#edcc44" stroke-width="2" stroke-linejoin="round"/><polyline points="1257.0,559.4 1269.0,559.4 1275.2,574.0 1294.2,574.0 1300.3,584.9 1318.9,584.9 1325.5,647.9 1343.8,647.9 1350.0,544.0 1368.1,544.0 1374.7,536.6 1393.1,536.6 1399.2,495.9 1417.8,495.9 1423.9,439.7 1442.9,439.7 1449.1,495.9 1467.6,495.9 1474.0,506.9 1492.1,506.9 1498.7,536.6 1516.9,536.6 1523.2,502.9 1541.6,502.9 1547.9,480.6 1566.5,480.6 1573.1,458.7 1591.7,458.7 1597.8,502.9 1616.2,502.9 1622.7,480.6 1629.3,480.6" fill="none" stroke="#93b8f7" stroke-width="2" stroke-linejoin="round"/><polyline points="1257.0,559.4 1269.0,559.4 1275.2,574.0 1294.2,574.0 1300.3,584.9 1318.9,584.9 1325.5,651.9 1343.8,651.9 1350.0,548.0 1368.1,548.0 1374.7,540.1 1393.1,540.1 1399.2,495.9 1417.8,495.9 1423.9,439.7 1442.9,439.7 1449.1,495.9 1467.6,495.9 1474.0,510.8 1492.1,510.8 1498.7,536.6 1516.9,536.6 1523.2,506.9 1541.6,506.9 1547.9,480.6 1566.5,480.6 1573.1,458.7 1591.7,458.7 1597.8,502.9 1616.2,502.9 1622.7,480.6 1629.3,480.6" fill="none" stroke="#f0883a" stroke-width="2" stroke-linejoin="round"/></svg>
<div class="a" style="left:1174px;top:750.2px;width:28px;height:8px;background:#7fbe6f;border-radius:4px;"></div>
<div class="a" style="left:1174px;top:797.1px;width:28px;height:8px;background:#edcc44;border-radius:4px;"></div>
<div class="a" style="left:1174px;top:844.0px;width:28px;height:8px;background:#93b8f7;border-radius:4px;"></div>
<div class="a" style="left:1682px;top:316px;width:516px;height:592px;background:#1a1b1f;border:2px solid #303137;border-radius:5px;box-sizing:border-box;"></div>
<svg class="a" style="left:0;top:0" width="2750" height="1596" viewBox="0 0 2750 1596"><line x1="1800.0" y1="456.5" x2="2165.0" y2="456.5" stroke="rgba(240,250,255,0.09)" stroke-width="1"/><line x1="1800.0" y1="502.5" x2="2165.0" y2="502.5" stroke="rgba(240,250,255,0.09)" stroke-width="1"/><line x1="1800.0" y1="548.5" x2="2165.0" y2="548.5" stroke="rgba(240,250,255,0.09)" stroke-width="1"/><line x1="1800.0" y1="595.5" x2="2165.0" y2="595.5" stroke="rgba(240,250,255,0.09)" stroke-width="1"/><line x1="1800.0" y1="641.5" x2="2165.0" y2="641.5" stroke="rgba(240,250,255,0.09)" stroke-width="1"/><line x1="1805.5" y1="414.0" x2="1805.5" y2="682.3" stroke="rgba(240,250,255,0.09)" stroke-width="1"/><line x1="1926.5" y1="414.0" x2="1926.5" y2="682.3" stroke="rgba(240,250,255,0.09)" stroke-width="1"/><line x1="2048.5" y1="414.0" x2="2048.5" y2="682.3" stroke="rgba(240,250,255,0.09)" stroke-width="1"/><polygon points="1799.0,674.8 1799.0,597.8 1811.1,597.8 1817.2,651.9 1835.1,651.9 1841.3,535.9 1859.2,535.9 1866.2,578.8 1883.9,578.8 1890.5,469.9 1908.4,469.9 1914.5,590.8 1932.0,590.8 1938.4,464.9 1957.0,464.9 1963.5,639.8 1981.0,639.8 1987.1,515.0 2005.3,515.0 2011.2,563.7 2029.1,563.7 2035.3,644.0 2053.9,644.0 2060.0,517.1 2078.4,517.1 2084.5,577.9 2102.2,577.9 2108.5,451.7 2126.0,451.7 2132.2,561.1 2151.2,561.1 2157.3,436.2 2162.8,436.2 2162.8,674.8" fill="#7fbe6f" fill-opacity="0.1"/><polygon points="1799.0,674.8 1799.0,597.8 1811.1,597.8 1817.2,651.9 1835.1,651.9 1841.3,535.9 1859.2,535.9 1866.2,578.8 1883.9,578.8 1890.5,469.9 1908.4,469.9 1914.5,590.8 1932.0,590.8 1938.4,464.9 1957.0,464.9 1963.5,639.8 1981.0,639.8 1987.1,515.0 2005.3,515.0 2011.2,563.7 2029.1,563.7 2035.3,644.0 2053.9,644.0 2060.0,517.1 2078.4,517.1 2084.5,577.9 2102.2,577.9 2108.5,451.7 2126.0,451.7 2132.2,561.1 2151.2,561.1 2157.3,436.2 2162.8,436.2 2162.8,674.8" fill="#edcc44" fill-opacity="0.1"/><polygon points="1799.0,674.8 1799.0,597.8 1811.1,597.8 1817.2,651.9 1835.1,651.9 1841.3,535.9 1859.2,535.9 1866.2,578.8 1883.9,578.8 1890.5,469.9 1908.4,469.9 1914.5,590.8 1932.0,590.8 1938.4,464.9 1957.0,464.9 1963.5,639.8 1981.0,639.8 1987.1,515.0 2005.3,515.0 2011.2,565.3 2029.1,565.3 2035.3,644.0 2053.9,644.0 2060.0,517.1 2078.4,517.1 2084.5,577.9 2102.2,577.9 2108.5,451.7 2126.0,451.7 2132.2,562.7 2151.2,562.7 2157.3,436.2 2162.8,436.2 2162.8,674.8" fill="#93b8f7" fill-opacity="0.1"/><polygon points="1799.0,674.8 1799.0,597.8 1811.1,597.8 1817.2,651.9 1835.1,651.9 1841.3,535.9 1859.2,535.9 1866.2,578.8 1883.9,578.8 1890.5,469.9 1908.4,469.9 1914.5,590.8 1932.0,590.8 1938.4,464.9 1957.0,464.9 1963.5,639.8 1981.0,639.8 1987.1,515.0 2005.3,515.0 2011.2,563.7 2029.1,563.7 2035.3,644.0 2053.9,644.0 2060.0,517.1 2078.4,517.1 2084.5,577.9 2102.2,577.9 2108.5,451.7 2126.0,451.7 2132.2,561.1 2151.2,561.1 2157.3,436.2 2162.8,436.2 2162.8,674.8" fill="#f0883a" fill-opacity="0.1"/><polyline points="1799.0,597.8 1811.1,597.8 1817.2,651.9 1835.1,651.9 1841.3,535.9 1859.2,535.9 1866.2,578.8 1883.9,578.8 1890.5,469.9 1908.4,469.9 1914.5,590.8 1932.0,590.8 1938.4,464.9 1957.0,464.9 1963.5,639.8 1981.0,639.8 1987.1,515.0 2005.3,515.0 2011.2,563.7 2029.1,563.7 2035.3,644.0 2053.9,644.0 2060.0,517.1 2078.4,517.1 2084.5,577.9 2102.2,577.9 2108.5,451.7 2126.0,451.7 2132.2,561.1 2151.2,561.1 2157.3,436.2 2162.8,436.2" fill="none" stroke="#7fbe6f" stroke-width="2" stroke-linejoin="round"/><polyline points="1799.0,597.8 1811.1,597.8 1817.2,651.9 1835.1,651.9 1841.3,535.9 1859.2,535.9 1866.2,578.8 1883.9,578.8 1890.5,469.9 1908.4,469.9 1914.5,590.8 1932.0,590.8 1938.4,464.9 1957.0,464.9 1963.5,639.8 1981.0,639.8 1987.1,515.0 2005.3,515.0 2011.2,563.7 2029.1,563.7 2035.3,644.0 2053.9,644.0 2060.0,517.1 2078.4,517.1 2084.5,577.9 2102.2,577.9 2108.5,451.7 2126.0,451.7 2132.2,561.1 2151.2,561.1 2157.3,436.2 2162.8,436.2" fill="none" stroke="#edcc44" stroke-width="2" stroke-linejoin="round"/><polyline points="1799.0,597.8 1811.1,597.8 1817.2,651.9 1835.1,651.9 1841.3,535.9 1859.2,535.9 1866.2,578.8 1883.9,578.8 1890.5,469.9 1908.4,469.9 1914.5,590.8 1932.0,590.8 1938.4,464.9 1957.0,464.9 1963.5,639.8 1981.0,639.8 1987.1,515.0 2005.3,515.0 2011.2,565.3 2029.1,565.3 2035.3,644.0 2053.9,644.0 2060.0,517.1 2078.4,517.1 2084.5,577.9 2102.2,577.9 2108.5,451.7 2126.0,451.7 2132.2,562.7 2151.2,562.7 2157.3,436.2 2162.8,436.2" fill="none" stroke="#93b8f7" stroke-width="2" stroke-linejoin="round"/><polyline points="1799.0,597.8 1811.1,597.8 1817.2,651.9 1835.1,651.9 1841.3,535.9 1859.2,535.9 1866.2,578.8 1883.9,578.8 1890.5,469.9 1908.4,469.9 1914.5,590.8 1932.0,590.8 1938.4,464.9 1957.0,464.9 1963.5,639.8 1981.0,639.8 1987.1,515.0 2005.3,515.0 2011.2,563.7 2029.1,563.7 2035.3,644.0 2053.9,644.0 2060.0,517.1 2078.4,517.1 2084.5,577.9 2102.2,577.9 2108.5,451.7 2126.0,451.7 2132.2,561.1 2151.2,561.1 2157.3,436.2 2162.8,436.2" fill="none" stroke="#f0883a" stroke-width="2" stroke-linejoin="round"/></svg>
<div class="a" style="left:1708px;top:750.2px;width:28px;height:8px;background:#7fbe6f;border-radius:4px;"></div>
<div class="a" style="left:1708px;top:797.1px;width:28px;height:8px;background:#edcc44;border-radius:4px;"></div>
<div class="a" style="left:1708px;top:844.0px;width:28px;height:8px;background:#93b8f7;border-radius:4px;"></div>
<div class="a" style="left:2214px;top:316px;width:516px;height:592px;background:#1a1b1f;border:2px solid #303137;border-radius:5px;box-sizing:border-box;"></div>
<svg class="a" style="left:0;top:0" width="2750" height="1596" viewBox="0 0 2750 1596"><line x1="2332.4" y1="456.5" x2="2697.4" y2="456.5" stroke="rgba(240,250,255,0.09)" stroke-width="1"/><line x1="2332.4" y1="502.5" x2="2697.4" y2="502.5" stroke="rgba(240,250,255,0.09)" stroke-width="1"/><line x1="2332.4" y1="548.5" x2="2697.4" y2="548.5" stroke="rgba(240,250,255,0.09)" stroke-width="1"/><line x1="2332.4" y1="595.5" x2="2697.4" y2="595.5" stroke="rgba(240,250,255,0.09)" stroke-width="1"/><line x1="2332.4" y1="641.5" x2="2697.4" y2="641.5" stroke="rgba(240,250,255,0.09)" stroke-width="1"/><line x1="2338.5" y1="414.0" x2="2338.5" y2="682.3" stroke="rgba(240,250,255,0.09)" stroke-width="1"/><line x1="2459.5" y1="414.0" x2="2459.5" y2="682.3" stroke="rgba(240,250,255,0.09)" stroke-width="1"/><line x1="2581.5" y1="414.0" x2="2581.5" y2="682.3" stroke="rgba(240,250,255,0.09)" stroke-width="1"/><polygon points="2331.4,674.8 2331.4,597.8 2343.5,597.8 2349.6,651.9 2367.5,651.9 2373.7,535.9 2391.6,535.9 2398.6,578.8 2416.3,578.8 2422.9,469.9 2440.8,469.9 2446.9,590.8 2464.4,590.8 2470.8,464.9 2489.4,464.9 2495.9,639.8 2513.4,639.8 2519.5,515.0 2537.7,515.0 2543.6,563.7 2561.5,563.7 2567.7,644.0 2586.3,644.0 2592.4,517.1 2610.8,517.1 2616.9,577.9 2634.6,577.9 2640.9,451.7 2658.4,451.7 2664.6,561.1 2683.6,561.1 2689.7,436.2 2695.2,436.2 2695.2,674.8" fill="#7fbe6f" fill-opacity="0.1"/><polygon points="2331.4,674.8 2331.4,597.8 2343.5,597.8 2349.6,651.9 2367.5,651.9 2373.7,535.9 2391.6,535.9 2398.6,578.8 2416.3,578.8 2422.9,469.9 2440.8,469.9 2446.9,590.8 2464.4,590.8 2470.8,464.9 2489.4,464.9 2495.9,639.8 2513.4,639.8 2519.5,515.0 2537.7,515.0 2543.6,563.7 2561.5,563.7 2567.7,644.0 2586.3,644.0 2592.4,517.1 2610.8,517.1 2616.9,577.9 2634.6,577.9 2640.9,451.7 2658.4,451.7 2664.6,561.1 2683.6,561.1 2689.7,436.2 2695.2,436.2 2695.2,674.8" fill="#edcc44" fill-opacity="0.1"/><polygon points="2331.4,674.8 2331.4,597.8 2343.5,597.8 2349.6,651.9 2367.5,651.9 2373.7,535.9 2391.6,535.9 2398.6,578.8 2416.3,578.8 2422.9,469.9 2440.8,469.9 2446.9,590.8 2464.4,590.8 2470.8,464.9 2489.4,464.9 2495.9,639.8 2513.4,639.8 2519.5,515.0 2537.7,515.0 2543.6,565.3 2561.5,565.3 2567.7,644.0 2586.3,644.0 2592.4,517.1 2610.8,517.1 2616.9,577.9 2634.6,577.9 2640.9,451.7 2658.4,451.7 2664.6,562.7 2683.6,562.7 2689.7,436.2 2695.2,436.2 2695.2,674.8" fill="#93b8f7" fill-opacity="0.1"/><polygon points="2331.4,674.8 2331.4,597.8 2343.5,597.8 2349.6,651.9 2367.5,651.9 2373.7,535.9 2391.6,535.9 2398.6,578.8 2416.3,578.8 2422.9,469.9 2440.8,469.9 2446.9,590.8 2464.4,590.8 2470.8,464.9 2489.4,464.9 2495.9,639.8 2513.4,639.8 2519.5,515.0 2537.7,515.0 2543.6,563.7 2561.5,563.7 2567.7,644.0 2586.3,644.0 2592.4,517.1 2610.8,517.1 2616.9,577.9 2634.6,577.9 2640.9,451.7 2658.4,451.7 2664.6,561.1 2683.6,561.1 2689.7,436.2 2695.2,436.2 2695.2,674.8" fill="#f0883a" fill-opacity="0.1"/><polyline points="2331.4,597.8 2343.5,597.8 2349.6,651.9 2367.5,651.9 2373.7,535.9 2391.6,535.9 2398.6,578.8 2416.3,578.8 2422.9,469.9 2440.8,469.9 2446.9,590.8 2464.4,590.8 2470.8,464.9 2489.4,464.9 2495.9,639.8 2513.4,639.8 2519.5,515.0 2537.7,515.0 2543.6,563.7 2561.5,563.7 2567.7,644.0 2586.3,644.0 2592.4,517.1 2610.8,517.1 2616.9,577.9 2634.6,577.9 2640.9,451.7 2658.4,451.7 2664.6,561.1 2683.6,561.1 2689.7,436.2 2695.2,436.2" fill="none" stroke="#7fbe6f" stroke-width="2" stroke-linejoin="round"/><polyline points="2331.4,597.8 2343.5,597.8 2349.6,651.9 2367.5,651.9 2373.7,535.9 2391.6,535.9 2398.6,578.8 2416.3,578.8 2422.9,469.9 2440.8,469.9 2446.9,590.8 2464.4,590.8 2470.8,464.9 2489.4,464.9 2495.9,639.8 2513.4,639.8 2519.5,515.0 2537.7,515.0 2543.6,563.7 2561.5,563.7 2567.7,644.0 2586.3,644.0 2592.4,517.1 2610.8,517.1 2616.9,577.9 2634.6,577.9 2640.9,451.7 2658.4,451.7 2664.6,561.1 2683.6,561.1 2689.7,436.2 2695.2,436.2" fill="none" stroke="#edcc44" stroke-width="2" stroke-linejoin="round"/><polyline points="2331.4,597.8 2343.5,597.8 2349.6,651.9 2367.5,651.9 2373.7,535.9 2391.6,535.9 2398.6,578.8 2416.3,578.8 2422.9,469.9 2440.8,469.9 2446.9,590.8 2464.4,590.8 2470.8,464.9 2489.4,464.9 2495.9,639.8 2513.4,639.8 2519.5,515.0 2537.7,515.0 2543.6,565.3 2561.5,565.3 2567.7,644.0 2586.3,644.0 2592.4,517.1 2610.8,517.1 2616.9,577.9 2634.6,577.9 2640.9,451.7 2658.4,451.7 2664.6,562.7 2683.6,562.7 2689.7,436.2 2695.2,436.2" fill="none" stroke="#93b8f7" stroke-width="2" stroke-linejoin="round"/><polyline points="2331.4,597.8 2343.5,597.8 2349.6,651.9 2367.5,651.9 2373.7,535.9 2391.6,535.9 2398.6,578.8 2416.3,578.8 2422.9,469.9 2440.8,469.9 2446.9,590.8 2464.4,590.8 2470.8,464.9 2489.4,464.9 2495.9,639.8 2513.4,639.8 2519.5,515.0 2537.7,515.0 2543.6,563.7 2561.5,563.7 2567.7,644.0 2586.3,644.0 2592.4,517.1 2610.8,517.1 2616.9,577.9 2634.6,577.9 2640.9,451.7 2658.4,451.7 2664.6,561.1 2683.6,561.1 2689.7,436.2 2695.2,436.2" fill="none" stroke="#f0883a" stroke-width="2" stroke-linejoin="round"/></svg>
<div class="a" style="left:2240px;top:750.2px;width:28px;height:8px;background:#7fbe6f;border-radius:4px;"></div>
<div class="a" style="left:2240px;top:797.1px;width:28px;height:8px;background:#edcc44;border-radius:4px;"></div>
<div class="a" style="left:2240px;top:844.0px;width:28px;height:8px;background:#93b8f7;border-radius:4px;"></div>
<div class="a" style="left:616px;top:924px;width:516px;height:668px;background:#1a1b1f;border:2px solid #303137;border-radius:5px;box-sizing:border-box;"></div>
<svg class="a" style="left:0;top:0" width="2750" height="1596" viewBox="0 0 2750 1596"><line x1="748.0" y1="1054.5" x2="1099.0" y2="1054.5" stroke="rgba(240,250,255,0.09)" stroke-width="1"/><line x1="748.0" y1="1128.5" x2="1099.0" y2="1128.5" stroke="rgba(240,250,255,0.09)" stroke-width="1"/><line x1="748.0" y1="1202.5" x2="1099.0" y2="1202.5" stroke="rgba(240,250,255,0.09)" stroke-width="1"/><line x1="748.0" y1="1275.5" x2="1099.0" y2="1275.5" stroke="rgba(240,250,255,0.09)" stroke-width="1"/><line x1="753.5" y1="1022.0" x2="753.5" y2="1340.2" stroke="rgba(240,250,255,0.09)" stroke-width="1"/><line x1="870.5" y1="1022.0" x2="870.5" y2="1340.2" stroke="rgba(240,250,255,0.09)" stroke-width="1"/><line x1="986.5" y1="1022.0" x2="986.5" y2="1340.2" stroke="rgba(240,250,255,0.09)" stroke-width="1"/><polygon points="747.0,1332.7 747.0,1298.6 757.9,1298.6 764.0,1257.0 782.0,1257.0 788.1,1094.7 805.2,1094.7 811.1,1285.0 827.9,1285.0 834.0,1237.8 852.6,1237.8 858.5,1257.0 875.2,1257.0 881.1,1080.9 898.6,1080.9 904.0,1177.8 922.0,1177.8 928.1,1053.6 945.1,1053.6 951.0,1187.7 968.5,1187.7 974.5,1257.0 992.0,1257.0 998.1,1108.7 1015.1,1108.7 1021.0,1219.8 1038.1,1219.8 1044.0,1076.6 1061.9,1076.6 1068.1,1234.0 1085.1,1234.0 1091.0,1080.9 1096.9,1080.9 1096.9,1332.7" fill="#7fbe6f" fill-opacity="0.1"/><polygon points="747.0,1332.7 747.0,1298.6 757.9,1298.6 764.0,1257.0 782.0,1257.0 788.1,1094.7 805.2,1094.7 811.1,1285.0 827.9,1285.0 834.0,1237.8 852.6,1237.8 858.5,1257.0 875.2,1257.0 881.1,1080.9 898.6,1080.9 904.0,1177.8 922.0,1177.8 928.1,1053.6 945.1,1053.6 951.0,1187.7 968.5,1187.7 974.5,1257.0 992.0,1257.0 998.1,1108.7 1015.1,1108.7 1021.0,1219.8 1038.1,1219.8 1044.0,1076.6 1061.9,1076.6 1068.1,1234.0 1085.1,1234.0 1091.0,1080.9 1096.9,1080.9 1096.9,1332.7" fill="#edcc44" fill-opacity="0.1"/><polygon points="747.0,1332.7 747.0,1298.6 757.9,1298.6 764.0,1257.0 782.0,1257.0 788.1,1094.7 805.2,1094.7 811.1,1285.0 827.9,1285.0 834.0,1237.8 852.6,1237.8 858.5,1257.0 875.2,1257.0 881.1,1080.9 898.6,1080.9 904.0,1177.8 922.0,1177.8 928.1,1053.6 945.1,1053.6 951.0,1187.7 968.5,1187.7 974.5,1257.0 992.0,1257.0 998.1,1108.7 1015.1,1108.7 1021.0,1219.8 1038.1,1219.8 1044.0,1076.6 1061.9,1076.6 1068.1,1234.0 1085.1,1234.0 1091.0,1080.9 1096.9,1080.9 1096.9,1332.7" fill="#93b8f7" fill-opacity="0.1"/><polygon points="747.0,1332.7 747.0,1298.6 757.9,1298.6 764.0,1257.0 782.0,1257.0 788.1,1094.7 805.2,1094.7 811.1,1285.0 827.9,1285.0 834.0,1237.8 852.6,1237.8 858.5,1257.0 875.2,1257.0 881.1,1080.9 898.6,1080.9 904.0,1177.8 922.0,1177.8 928.1,1053.6 945.1,1053.6 951.0,1187.7 968.5,1187.7 974.5,1257.0 992.0,1257.0 998.1,1108.7 1015.1,1108.7 1021.0,1219.8 1038.1,1219.8 1044.0,1076.6 1061.9,1076.6 1068.1,1234.0 1085.1,1234.0 1091.0,1080.9 1096.9,1080.9 1096.9,1332.7" fill="#f0883a" fill-opacity="0.1"/><polyline points="747.0,1298.6 757.9,1298.6 764.0,1257.0 782.0,1257.0 788.1,1094.7 805.2,1094.7 811.1,1285.0 827.9,1285.0 834.0,1237.8 852.6,1237.8 858.5,1257.0 875.2,1257.0 881.1,1080.9 898.6,1080.9 904.0,1177.8 922.0,1177.8 928.1,1053.6 945.1,1053.6 951.0,1187.7 968.5,1187.7 974.5,1257.0 992.0,1257.0 998.1,1108.7 1015.1,1108.7 1021.0,1219.8 1038.1,1219.8 1044.0,1076.6 1061.9,1076.6 1068.1,1234.0 1085.1,1234.0 1091.0,1080.9 1096.9,1080.9" fill="none" stroke="#7fbe6f" stroke-width="2" stroke-linejoin="round"/><polyline points="747.0,1298.6 757.9,1298.6 764.0,1257.0 782.0,1257.0 788.1,1094.7 805.2,1094.7 811.1,1285.0 827.9,1285.0 834.0,1237.8 852.6,1237.8 858.5,1257.0 875.2,1257.0 881.1,1080.9 898.6,1080.9 904.0,1177.8 922.0,1177.8 928.1,1053.6 945.1,1053.6 951.0,1187.7 968.5,1187.7 974.5,1257.0 992.0,1257.0 998.1,1108.7 1015.1,1108.7 1021.0,1219.8 1038.1,1219.8 1044.0,1076.6 1061.9,1076.6 1068.1,1234.0 1085.1,1234.0 1091.0,1080.9 1096.9,1080.9" fill="none" stroke="#edcc44" stroke-width="2" stroke-linejoin="round"/><polyline points="747.0,1298.6 757.9,1298.6 764.0,1257.0 782.0,1257.0 788.1,1094.7 805.2,1094.7 811.1,1285.0 827.9,1285.0 834.0,1237.8 852.6,1237.8 858.5,1257.0 875.2,1257.0 881.1,1080.9 898.6,1080.9 904.0,1177.8 922.0,1177.8 928.1,1053.6 945.1,1053.6 951.0,1187.7 968.5,1187.7 974.5,1257.0 992.0,1257.0 998.1,1108.7 1015.1,1108.7 1021.0,1219.8 1038.1,1219.8 1044.0,1076.6 1061.9,1076.6 1068.1,1234.0 1085.1,1234.0 1091.0,1080.9 1096.9,1080.9" fill="none" stroke="#93b8f7" stroke-width="2" stroke-linejoin="round"/><polyline points="747.0,1298.6 757.9,1298.6 764.0,1257.0 782.0,1257.0 788.1,1094.7 805.2,1094.7 811.1,1285.0 827.9,1285.0 834.0,1237.8 852.6,1237.8 858.5,1257.0 875.2,1257.0 881.1,1080.9 898.6,1080.9 904.0,1177.8 922.0,1177.8 928.1,1053.6 945.1,1053.6 951.0,1187.7 968.5,1187.7 974.5,1257.0 992.0,1257.0 998.1,1108.7 1015.1,1108.7 1021.0,1219.8 1038.1,1219.8 1044.0,1076.6 1061.9,1076.6 1068.1,1234.0 1085.1,1234.0 1091.0,1080.9 1096.9,1080.9" fill="none" stroke="#f0883a" stroke-width="2" stroke-linejoin="round"/></svg>
<div class="a" style="left:642px;top:1407.1px;width:28px;height:8px;background:#7fbe6f;border-radius:4px;"></div>
<div class="a" style="left:642px;top:1454.1px;width:28px;height:8px;background:#edcc44;border-radius:4px;"></div>
<div class="a" style="left:642px;top:1501.1px;width:28px;height:8px;background:#93b8f7;border-radius:4px;"></div>
<div class="a" style="left:642px;top:1548.1px;width:28px;height:8px;background:#f0883a;border-radius:4px;"></div>
<div class="a" style="left:1148px;top:924px;width:516px;height:668px;background:#1a1b1f;border:2px solid #303137;border-radius:5px;box-sizing:border-box;"></div>
<div class="a" style="left:1682px;top:924px;width:516px;height:668px;background:#1a1b1f;border:2px solid #303137;border-radius:5px;box-sizing:border-box;"></div>
<svg class="a" style="left:0;top:0" width="2750" height="1596" viewBox="0 0 2750 1596"><line x1="1838.4" y1="1116.5" x2="2165.0" y2="1116.5" stroke="rgba(240,250,255,0.09)" stroke-width="1"/><line x1="1838.4" y1="1233.5" x2="2165.0" y2="1233.5" stroke="rgba(240,250,255,0.09)" stroke-width="1"/><line x1="1838.4" y1="1351.5" x2="2165.0" y2="1351.5" stroke="rgba(240,250,255,0.09)" stroke-width="1"/><line x1="1838.4" y1="1468.5" x2="2165.0" y2="1468.5" stroke="rgba(240,250,255,0.09)" stroke-width="1"/><line x1="1842.5" y1="1022.0" x2="1842.5" y2="1475.8" stroke="rgba(240,250,255,0.09)" stroke-width="1"/><line x1="1951.5" y1="1022.0" x2="1951.5" y2="1475.8" stroke="rgba(240,250,255,0.09)" stroke-width="1"/><line x1="2060.5" y1="1022.0" x2="2060.5" y2="1475.8" stroke="rgba(240,250,255,0.09)" stroke-width="1"/><polygon points="1836.9,1468.3 1836.9,1245.0 2163.0,1245.0 2163.0,1468.3" fill="#7fbe6f" fill-opacity="0.1"/><polyline points="1836.9,1245.0 2163.0,1245.0" fill="none" stroke="#7fbe6f" stroke-width="2" stroke-linejoin="round"/></svg>
<div class="a" style="left:1708px;top:1543.2px;width:28px;height:8px;background:#7fbe6f;border-radius:4px;"></div>
<div class="a" style="left:2214px;top:924px;width:516px;height:668px;background:#1a1b1f;border:2px solid #303137;border-radius:5px;box-sizing:border-box;"></div>
<div class="a" style="left:2232px;top:990px;width:480px;height:480px;overflow:hidden"><div class="a" style="left:-2232px;top:-990px;width:2750px;height:1596px" id="stclip">
<svg class="a" style="left:0;top:0" width="2750" height="1596" viewBox="0 0 2750 1596"><line x1="2254.5" y1="1006.0" x2="2254.5" y2="1430.2" stroke="rgba(240,250,255,0.09)" stroke-width="1"/><line x1="2403.5" y1="1006.0" x2="2403.5" y2="1430.2" stroke="rgba(240,250,255,0.09)" stroke-width="1"/><line x1="2553.5" y1="1006.0" x2="2553.5" y2="1430.2" stroke="rgba(240,250,255,0.09)" stroke-width="1"/></svg>
<div class="a t" style="left:2219.80px;top:1438.10px;font-size:24.8px;line-height:24.8px;color:#ccccdc;letter-spacing:1.685px;-webkit-text-stroke:0.5px #ccccdc;">10:25</div>
<div class="a t" style="left:2368.90px;top:1438.10px;font-size:24.8px;line-height:24.8px;color:#ccccdc;letter-spacing:1.685px;-webkit-text-stroke:0.5px #ccccdc;">10:30</div>
<div class="a t" style="left:2519.10px;top:1438.10px;font-size:24.8px;line-height:24.8px;color:#ccccdc;letter-spacing:1.685px;-webkit-text-stroke:0.5px #ccccdc;">10:35</div></div></div>
<div class="a" style="left:2240px;top:1496px;width:28px;height:8px;background:#7fbe6f;border-radius:4px;"></div>
<div class="a" style="left:2240px;top:1543.3px;width:28px;height:8px;background:#edcc44;border-radius:4px;"></div>
<div class="a t" style="left:88.00px;top:38.00px;font-size:29.0px;line-height:29.0px;color:#ccccdc;letter-spacing:-0.026px;-webkit-text-stroke:0.5px #ccccdc;">Grafana</div>
<div class="a t" style="left:87.00px;top:127.50px;font-size:29.0px;line-height:29.0px;color:#8e8e9a;letter-spacing:0.924px;-webkit-text-stroke:0.5px #8e8e9a;">Home</div>
<div class="a t" style="left:87.00px;top:191.50px;font-size:29.0px;line-height:29.0px;color:#8e8e9a;letter-spacing:0.745px;-webkit-text-stroke:0.5px #8e8e9a;">Bookmarks</div>
<div class="a t" style="left:88.00px;top:255.50px;font-size:29.0px;line-height:29.0px;color:#8e8e9a;letter-spacing:0.671px;-webkit-text-stroke:0.5px #8e8e9a;">Starred</div>
<div class="a t" style="left:87.00px;top:319.50px;font-size:29.0px;line-height:29.0px;color:#ccccdc;letter-spacing:0.625px;-webkit-text-stroke:0.5px #ccccdc;">Dashboards</div>
<div class="a t" style="left:87.00px;top:383.50px;font-size:29.0px;line-height:29.0px;color:#8e8e9a;letter-spacing:0.550px;-webkit-text-stroke:0.5px #8e8e9a;">Explore</div>
<div class="a t" style="left:87.00px;top:447.50px;font-size:29.0px;line-height:29.0px;color:#8e8e9a;letter-spacing:1.046px;-webkit-text-stroke:0.5px #8e8e9a;">Drilldown</div>
<div class="a t" style="left:89.00px;top:511.50px;font-size:29.0px;line-height:29.0px;color:#8e8e9a;letter-spacing:0.900px;-webkit-text-stroke:0.5px #8e8e9a;">Alerting</div>
<div class="a t" style="left:88.00px;top:575.50px;font-size:29.0px;line-height:29.0px;color:#8e8e9a;letter-spacing:0.779px;-webkit-text-stroke:0.5px #8e8e9a;">Connections</div>
<div class="a t" style="left:89.00px;top:639.50px;font-size:29.0px;line-height:29.0px;color:#8e8e9a;letter-spacing:0.850px;-webkit-text-stroke:0.5px #8e8e9a;">Add new connection</div>
<div class="a t" style="left:87.00px;top:703.50px;font-size:29.0px;line-height:29.0px;color:#8e8e9a;letter-spacing:0.649px;-webkit-text-stroke:0.5px #8e8e9a;">Data sources</div>
<div class="a t" style="left:89.00px;top:767.50px;font-size:29.0px;line-height:29.0px;color:#8e8e9a;letter-spacing:0.760px;-webkit-text-stroke:0.5px #8e8e9a;">Administration</div>
<div class="a t" style="left:646.75px;top:38.50px;font-size:29.0px;line-height:29.0px;color:#ccccdc;letter-spacing:1.090px;-webkit-text-stroke:0.5px #ccccdc;">Home</div>
<div class="a t" style="left:775.00px;top:38.50px;font-size:29.0px;line-height:29.0px;color:#ccccdc;letter-spacing:0.625px;-webkit-text-stroke:0.5px #ccccdc;">Dashboards</div>
<div class="a t" style="left:987.00px;top:38.50px;font-size:29.0px;line-height:29.0px;color:#8e8e9a;letter-spacing:0.716px;-webkit-text-stroke:0.5px #8e8e9a;">Temporal Server Metrics</div>
<div class="a t" style="left:1816.00px;top:39.00px;font-size:29.0px;line-height:29.0px;color:#8e8e9a;letter-spacing:0.250px;-webkit-text-stroke:0.5px #8e8e9a;">Search...</div>
<div class="a t" style="left:2388.75px;top:40.50px;font-size:24px;line-height:24px;color:#8e8e9a;letter-spacing:0.742px;-webkit-text-stroke:0.5px #8e8e9a;">⌘+k</div>
<div class="a t" style="left:2339.00px;top:120.50px;font-size:24.0px;line-height:24.0px;color:#ccccdc;letter-spacing:0.438px;-webkit-text-stroke:1.0px #ccccdc;">Edit</div>
<div class="a t" style="left:2457.50px;top:120.50px;font-size:24.0px;line-height:24.0px;color:#ccccdc;letter-spacing:0.961px;-webkit-text-stroke:1.0px #ccccdc;">Export</div>
<div class="a t" style="left:2616.55px;top:120.50px;font-size:24.0px;line-height:24.0px;color:#ffffff;letter-spacing:0.551px;-webkit-text-stroke:1.1px #ffffff;">Share</div>
<div class="a t" style="left:635.75px;top:225.70px;font-size:24.6px;line-height:24.6px;color:#ccccdc;letter-spacing:1.195px;-webkit-text-stroke:1.0px #ccccdc;">Service</div>
<div class="a t" style="left:760.25px;top:223.00px;font-size:29.0px;line-height:29.0px;color:#ccccdc;letter-spacing:0.232px;-webkit-text-stroke:0.5px #ccccdc;">All</div>
<div class="a t" style="left:895.00px;top:225.70px;font-size:24.6px;line-height:24.6px;color:#ccccdc;letter-spacing:0.891px;-webkit-text-stroke:1.0px #ccccdc;">Client</div>
<div class="a t" style="left:998.25px;top:223.00px;font-size:29.0px;line-height:29.0px;color:#ccccdc;letter-spacing:0.232px;-webkit-text-stroke:0.5px #ccccdc;">All</div>
<div class="a t" style="left:2029.05px;top:223.30px;font-size:28.4px;line-height:28.4px;color:#ccccdc;letter-spacing:1.209px;-webkit-text-stroke:1.1px #ccccdc;">Last 15 minutes</div>
<div class="a t" style="left:2539.80px;top:223.30px;font-size:28.4px;line-height:28.4px;color:#ccccdc;letter-spacing:1.088px;-webkit-text-stroke:1.1px #ccccdc;">Refresh</div>
<div class="a t" style="left:633.05px;top:335.80px;font-size:28.4px;line-height:28.4px;color:#ccccdc;letter-spacing:0.913px;-webkit-text-stroke:1.1px #ccccdc;">Restarts</div>
<div class="a t" style="left:643.75px;top:400.80px;font-size:24.8px;line-height:24.8px;color:#ccccdc;-webkit-text-stroke:0.5px #ccccdc;">8</div>
<div class="a t" style="left:643.75px;top:493.30px;font-size:24.8px;line-height:24.8px;color:#ccccdc;-webkit-text-stroke:0.5px #ccccdc;">6</div>
<div class="a t" style="left:642.75px;top:585.80px;font-size:24.8px;line-height:24.8px;color:#ccccdc;-webkit-text-stroke:0.5px #ccccdc;">4</div>
<div class="a t" style="left:643.75px;top:678.30px;font-size:24.8px;line-height:24.8px;color:#ccccdc;-webkit-text-stroke:0.5px #ccccdc;">2</div>
<div class="a t" style="left:643.75px;top:770.80px;font-size:24.8px;line-height:24.8px;color:#ccccdc;-webkit-text-stroke:0.5px #ccccdc;">0</div>
<div class="a t" style="left:639.75px;top:800.40px;font-size:24.8px;line-height:24.8px;color:#ccccdc;letter-spacing:1.685px;-webkit-text-stroke:0.5px #ccccdc;">10:25</div>
<div class="a t" style="left:782.75px;top:800.40px;font-size:24.8px;line-height:24.8px;color:#ccccdc;letter-spacing:1.685px;-webkit-text-stroke:0.5px #ccccdc;">10:30</div>
<div class="a t" style="left:925.75px;top:800.40px;font-size:24.8px;line-height:24.8px;color:#ccccdc;letter-spacing:1.685px;-webkit-text-stroke:0.5px #ccccdc;">10:35</div>
<div class="a t" style="left:686.65px;top:850.70px;font-size:24.8px;line-height:24.8px;color:#ccccdc;letter-spacing:0.428px;-webkit-text-stroke:0.5px #ccccdc;">Value</div>
<div class="a t" style="left:1166.05px;top:335.80px;font-size:28.4px;line-height:28.4px;color:#ccccdc;letter-spacing:1.136px;-webkit-text-stroke:1.1px #ccccdc;">Goroutines</div>
<div class="a t" style="left:1171.95px;top:415.95px;font-size:24.8px;line-height:24.8px;color:#ccccdc;letter-spacing:0.570px;-webkit-text-stroke:0.5px #ccccdc;">3.25 K</div>
<div class="a t" style="left:1171.95px;top:453.05px;font-size:24.8px;line-height:24.8px;color:#ccccdc;letter-spacing:0.570px;-webkit-text-stroke:0.5px #ccccdc;">3.24 K</div>
<div class="a t" style="left:1171.95px;top:490.15px;font-size:24.8px;line-height:24.8px;color:#ccccdc;letter-spacing:0.570px;-webkit-text-stroke:0.5px #ccccdc;">3.23 K</div>
<div class="a t" style="left:1171.95px;top:527.25px;font-size:24.8px;line-height:24.8px;color:#ccccdc;letter-spacing:0.570px;-webkit-text-stroke:0.5px #ccccdc;">3.22 K</div>
<div class="a t" style="left:1171.95px;top:564.35px;font-size:24.8px;line-height:24.8px;color:#ccccdc;letter-spacing:0.570px;-webkit-text-stroke:0.5px #ccccdc;">3.21 K</div>
<div class="a t" style="left:1171.95px;top:601.45px;font-size:24.8px;line-height:24.8px;color:#ccccdc;letter-spacing:0.570px;-webkit-text-stroke:0.5px #ccccdc;">3.20 K</div>
<div class="a t" style="left:1171.95px;top:638.55px;font-size:24.8px;line-height:24.8px;color:#ccccdc;letter-spacing:0.570px;-webkit-text-stroke:0.5px #ccccdc;">3.19 K</div>
<div class="a t" style="left:1229.10px;top:690.90px;font-size:24.8px;line-height:24.8px;color:#ccccdc;letter-spacing:1.685px;-webkit-text-stroke:0.5px #ccccdc;">10:25</div>
<div class="a t" style="left:1353.10px;top:690.90px;font-size:24.8px;line-height:24.8px;color:#ccccdc;letter-spacing:1.685px;-webkit-text-stroke:0.5px #ccccdc;">10:30</div>
<div class="a t" style="left:1477.10px;top:690.90px;font-size:24.8px;line-height:24.8px;color:#ccccdc;letter-spacing:1.685px;-webkit-text-stroke:0.5px #ccccdc;">10:35</div>
<div class="a t" style="left:1217.65px;top:741.90px;font-size:24.8px;line-height:24.8px;color:#ccccdc;letter-spacing:0.184px;-webkit-text-stroke:0.5px #ccccdc;width:428.35px;overflow:hidden;height:148.10px;">num_goroutines {__name__=&quot;num_go</div>
<div class="a t" style="left:1217.65px;top:788.80px;font-size:24.8px;line-height:24.8px;color:#ccccdc;letter-spacing:0.184px;-webkit-text-stroke:0.5px #ccccdc;width:428.35px;overflow:hidden;height:101.20px;">num_goroutines {__name__=&quot;num_go</div>
<div class="a t" style="left:1217.65px;top:835.70px;font-size:24.8px;line-height:24.8px;color:#ccccdc;letter-spacing:0.184px;-webkit-text-stroke:0.5px #ccccdc;width:428.35px;overflow:hidden;height:54.30px;">num_goroutines {__name__=&quot;num_go</div>
<div class="a t" style="left:1217.65px;top:882.60px;font-size:24.8px;line-height:24.8px;color:#ccccdc;letter-spacing:0.184px;-webkit-text-stroke:0.5px #ccccdc;width:428.35px;overflow:hidden;height:7.40px;">num_goroutines {__name__=&quot;num_go</div>
<div class="a t" style="left:1699.05px;top:335.80px;font-size:28.4px;line-height:28.4px;color:#ccccdc;letter-spacing:1.565px;-webkit-text-stroke:1.1px #ccccdc;">Memory Allocated</div>
<div class="a t" style="left:1707.55px;top:442.60px;font-size:24.8px;line-height:24.8px;color:#ccccdc;letter-spacing:0.873px;-webkit-text-stroke:0.5px #ccccdc;">72 MiB</div>
<div class="a t" style="left:1707.55px;top:488.80px;font-size:24.8px;line-height:24.8px;color:#ccccdc;letter-spacing:0.873px;-webkit-text-stroke:0.5px #ccccdc;">64 MiB</div>
<div class="a t" style="left:1707.55px;top:534.90px;font-size:24.8px;line-height:24.8px;color:#ccccdc;letter-spacing:0.873px;-webkit-text-stroke:0.5px #ccccdc;">56 MiB</div>
<div class="a t" style="left:1708.55px;top:581.50px;font-size:24.8px;line-height:24.8px;color:#ccccdc;letter-spacing:0.673px;-webkit-text-stroke:0.5px #ccccdc;">48 MiB</div>
<div class="a t" style="left:1708.55px;top:627.70px;font-size:24.8px;line-height:24.8px;color:#ccccdc;letter-spacing:0.673px;-webkit-text-stroke:0.5px #ccccdc;">40 MiB</div>
<div class="a t" style="left:1771.10px;top:690.90px;font-size:24.8px;line-height:24.8px;color:#ccccdc;letter-spacing:1.685px;-webkit-text-stroke:0.5px #ccccdc;">10:25</div>
<div class="a t" style="left:1892.40px;top:690.90px;font-size:24.8px;line-height:24.8px;color:#ccccdc;letter-spacing:1.685px;-webkit-text-stroke:0.5px #ccccdc;">10:30</div>
<div class="a t" style="left:2014.10px;top:690.90px;font-size:24.8px;line-height:24.8px;color:#ccccdc;letter-spacing:1.685px;-webkit-text-stroke:0.5px #ccccdc;">10:35</div>
<div class="a t" style="left:1751.65px;top:741.90px;font-size:24.8px;line-height:24.8px;color:#ccccdc;letter-spacing:0.184px;-webkit-text-stroke:0.5px #ccccdc;width:427.85px;overflow:hidden;height:148.10px;">memory_allocated {__name__=&quot;memor</div>
<div class="a t" style="left:1751.65px;top:788.80px;font-size:24.8px;line-height:24.8px;color:#ccccdc;letter-spacing:0.184px;-webkit-text-stroke:0.5px #ccccdc;width:427.85px;overflow:hidden;height:101.20px;">memory_allocated {__name__=&quot;memor</div>
<div class="a t" style="left:1751.65px;top:835.70px;font-size:24.8px;line-height:24.8px;color:#ccccdc;letter-spacing:0.184px;-webkit-text-stroke:0.5px #ccccdc;width:427.85px;overflow:hidden;height:54.30px;">memory_allocated {__name__=&quot;memor</div>
<div class="a t" style="left:1751.65px;top:882.60px;font-size:24.8px;line-height:24.8px;color:#ccccdc;letter-spacing:0.184px;-webkit-text-stroke:0.5px #ccccdc;width:427.85px;overflow:hidden;height:7.40px;">memory_allocated {__name__=&quot;memor</div>
<div class="a t" style="left:2231.05px;top:335.80px;font-size:28.4px;line-height:28.4px;color:#ccccdc;letter-spacing:1.440px;-webkit-text-stroke:1.1px #ccccdc;">Memory Heap</div>
<div class="a t" style="left:2239.95px;top:442.60px;font-size:24.8px;line-height:24.8px;color:#ccccdc;letter-spacing:0.873px;-webkit-text-stroke:0.5px #ccccdc;">72 MiB</div>
<div class="a t" style="left:2239.95px;top:488.80px;font-size:24.8px;line-height:24.8px;color:#ccccdc;letter-spacing:0.873px;-webkit-text-stroke:0.5px #ccccdc;">64 MiB</div>
<div class="a t" style="left:2239.95px;top:534.90px;font-size:24.8px;line-height:24.8px;color:#ccccdc;letter-spacing:0.873px;-webkit-text-stroke:0.5px #ccccdc;">56 MiB</div>
<div class="a t" style="left:2240.95px;top:581.50px;font-size:24.8px;line-height:24.8px;color:#ccccdc;letter-spacing:0.673px;-webkit-text-stroke:0.5px #ccccdc;">48 MiB</div>
<div class="a t" style="left:2240.95px;top:627.70px;font-size:24.8px;line-height:24.8px;color:#ccccdc;letter-spacing:0.673px;-webkit-text-stroke:0.5px #ccccdc;">40 MiB</div>
<div class="a t" style="left:2303.50px;top:690.90px;font-size:24.8px;line-height:24.8px;color:#ccccdc;letter-spacing:1.685px;-webkit-text-stroke:0.5px #ccccdc;">10:25</div>
<div class="a t" style="left:2424.80px;top:690.90px;font-size:24.8px;line-height:24.8px;color:#ccccdc;letter-spacing:1.685px;-webkit-text-stroke:0.5px #ccccdc;">10:30</div>
<div class="a t" style="left:2546.50px;top:690.90px;font-size:24.8px;line-height:24.8px;color:#ccccdc;letter-spacing:1.685px;-webkit-text-stroke:0.5px #ccccdc;">10:35</div>
<div class="a t" style="left:2283.65px;top:741.90px;font-size:24.8px;line-height:24.8px;color:#ccccdc;letter-spacing:0.184px;-webkit-text-stroke:0.5px #ccccdc;width:427.85px;overflow:hidden;height:148.10px;">memory_heap {__name__=&quot;memory_h</div>
<div class="a t" style="left:2283.65px;top:788.80px;font-size:24.8px;line-height:24.8px;color:#ccccdc;letter-spacing:0.184px;-webkit-text-stroke:0.5px #ccccdc;width:427.85px;overflow:hidden;height:101.20px;">memory_heap {__name__=&quot;memory_h</div>
<div class="a t" style="left:2283.65px;top:835.70px;font-size:24.8px;line-height:24.8px;color:#ccccdc;letter-spacing:0.184px;-webkit-text-stroke:0.5px #ccccdc;width:427.85px;overflow:hidden;height:54.30px;">memory_heap {__name__=&quot;memory_h</div>
<div class="a t" style="left:2283.65px;top:882.60px;font-size:24.8px;line-height:24.8px;color:#ccccdc;letter-spacing:0.184px;-webkit-text-stroke:0.5px #ccccdc;width:427.85px;overflow:hidden;height:7.40px;">memory_heap {__name__=&quot;memory_h</div>
<div class="a t" style="left:633.05px;top:943.80px;font-size:28.4px;line-height:28.4px;color:#ccccdc;letter-spacing:1.425px;-webkit-text-stroke:1.1px #ccccdc;">Memory Stack</div>
<div class="a t" style="left:655.95px;top:1040.30px;font-size:24.8px;line-height:24.8px;color:#ccccdc;letter-spacing:0.773px;-webkit-text-stroke:0.5px #ccccdc;">18 MiB</div>
<div class="a t" style="left:633.95px;top:1114.50px;font-size:24.8px;line-height:24.8px;color:#ccccdc;letter-spacing:0.741px;-webkit-text-stroke:0.5px #ccccdc;">17.5 MiB</div>
<div class="a t" style="left:655.95px;top:1188.60px;font-size:24.8px;line-height:24.8px;color:#ccccdc;letter-spacing:0.773px;-webkit-text-stroke:0.5px #ccccdc;">17 MiB</div>
<div class="a t" style="left:633.95px;top:1261.90px;font-size:24.8px;line-height:24.8px;color:#ccccdc;letter-spacing:0.741px;-webkit-text-stroke:0.5px #ccccdc;">16.5 MiB</div>
<div class="a t" style="left:719.00px;top:1348.80px;font-size:24.8px;line-height:24.8px;color:#ccccdc;letter-spacing:1.685px;-webkit-text-stroke:0.5px #ccccdc;">10:25</div>
<div class="a t" style="left:835.50px;top:1348.80px;font-size:24.8px;line-height:24.8px;color:#ccccdc;letter-spacing:1.685px;-webkit-text-stroke:0.5px #ccccdc;">10:30</div>
<div class="a t" style="left:952.20px;top:1348.80px;font-size:24.8px;line-height:24.8px;color:#ccccdc;letter-spacing:1.685px;-webkit-text-stroke:0.5px #ccccdc;">10:35</div>
<div class="a t" style="left:685.65px;top:1398.80px;font-size:24.8px;line-height:24.8px;color:#ccccdc;letter-spacing:0.184px;-webkit-text-stroke:0.5px #ccccdc;width:428.35px;overflow:hidden;">memory_stack {__name__=&quot;memory_s</div>
<div class="a t" style="left:685.65px;top:1445.80px;font-size:24.8px;line-height:24.8px;color:#ccccdc;letter-spacing:0.184px;-webkit-text-stroke:0.5px #ccccdc;width:428.35px;overflow:hidden;">memory_stack {__name__=&quot;memory_s</div>
<div class="a t" style="left:685.65px;top:1492.80px;font-size:24.8px;line-height:24.8px;color:#ccccdc;letter-spacing:0.184px;-webkit-text-stroke:0.5px #ccccdc;width:428.35px;overflow:hidden;">memory_stack {__name__=&quot;memory_s</div>
<div class="a t" style="left:685.65px;top:1539.80px;font-size:24.8px;line-height:24.8px;color:#ccccdc;letter-spacing:0.184px;-webkit-text-stroke:0.5px #ccccdc;width:428.35px;overflow:hidden;">memory_stack {__name__=&quot;memory_s</div>
<div class="a t" style="left:1166.05px;top:943.80px;font-size:28.4px;line-height:28.4px;color:#ccccdc;letter-spacing:0.764px;-webkit-text-stroke:1.1px #ccccdc;">GC Counter</div>
<div class="a t" style="left:1337.15px;top:1272.10px;font-size:37.4px;line-height:37.4px;color:#8e8e9a;letter-spacing:0.723px;-webkit-text-stroke:0.5px #8e8e9a;">No data</div>
<div class="a t" style="left:1700.05px;top:943.80px;font-size:28.4px;line-height:28.4px;color:#ccccdc;letter-spacing:0.245px;-webkit-text-stroke:1.1px #ccccdc;">GC Pause</div>
<div class="a t" style="left:1776.75px;top:1102.70px;font-size:24.8px;line-height:24.8px;color:#ccccdc;letter-spacing:1.051px;-webkit-text-stroke:0.5px #ccccdc;">NaN</div>
<div class="a t" style="left:1776.75px;top:1219.90px;font-size:24.8px;line-height:24.8px;color:#ccccdc;letter-spacing:1.051px;-webkit-text-stroke:0.5px #ccccdc;">NaN</div>
<div class="a t" style="left:1813.55px;top:1337.30px;font-size:24.8px;line-height:24.8px;color:#ccccdc;-webkit-text-stroke:0.5px #ccccdc;">0</div>
<div class="a t" style="left:1708.05px;top:1454.60px;font-size:24.8px;line-height:24.8px;color:#ccccdc;letter-spacing:0.732px;-webkit-text-stroke:0.5px #ccccdc;">0 seconds</div>
<div class="a t" style="left:1808.10px;top:1484.40px;font-size:24.8px;line-height:24.8px;color:#ccccdc;letter-spacing:1.685px;-webkit-text-stroke:0.5px #ccccdc;">10:25</div>
<div class="a t" style="left:1917.00px;top:1484.40px;font-size:24.8px;line-height:24.8px;color:#ccccdc;letter-spacing:1.685px;-webkit-text-stroke:0.5px #ccccdc;">10:30</div>
<div class="a t" style="left:2025.90px;top:1484.40px;font-size:24.8px;line-height:24.8px;color:#ccccdc;letter-spacing:1.685px;-webkit-text-stroke:0.5px #ccccdc;">10:35</div>
<div class="a t" style="left:1752.65px;top:1534.90px;font-size:24.8px;line-height:24.8px;color:#ccccdc;letter-spacing:0.428px;-webkit-text-stroke:0.5px #ccccdc;">Value</div>
<div class="a t" style="left:2232.05px;top:943.80px;font-size:28.4px;line-height:28.4px;color:#ccccdc;letter-spacing:1.127px;-webkit-text-stroke:1.1px #ccccdc;">State Transition</div>
<div class="a t" style="left:2284.65px;top:1487.70px;font-size:24.8px;line-height:24.8px;color:#ccccdc;letter-spacing:0.575px;-webkit-text-stroke:0.5px #ccccdc;">state transition</div>
<div class="a t" style="left:2284.65px;top:1535.00px;font-size:24.8px;line-height:24.8px;color:#ccccdc;letter-spacing:0.302px;-webkit-text-stroke:0.5px #ccccdc;">shard_item_created</div>

</body></html>
